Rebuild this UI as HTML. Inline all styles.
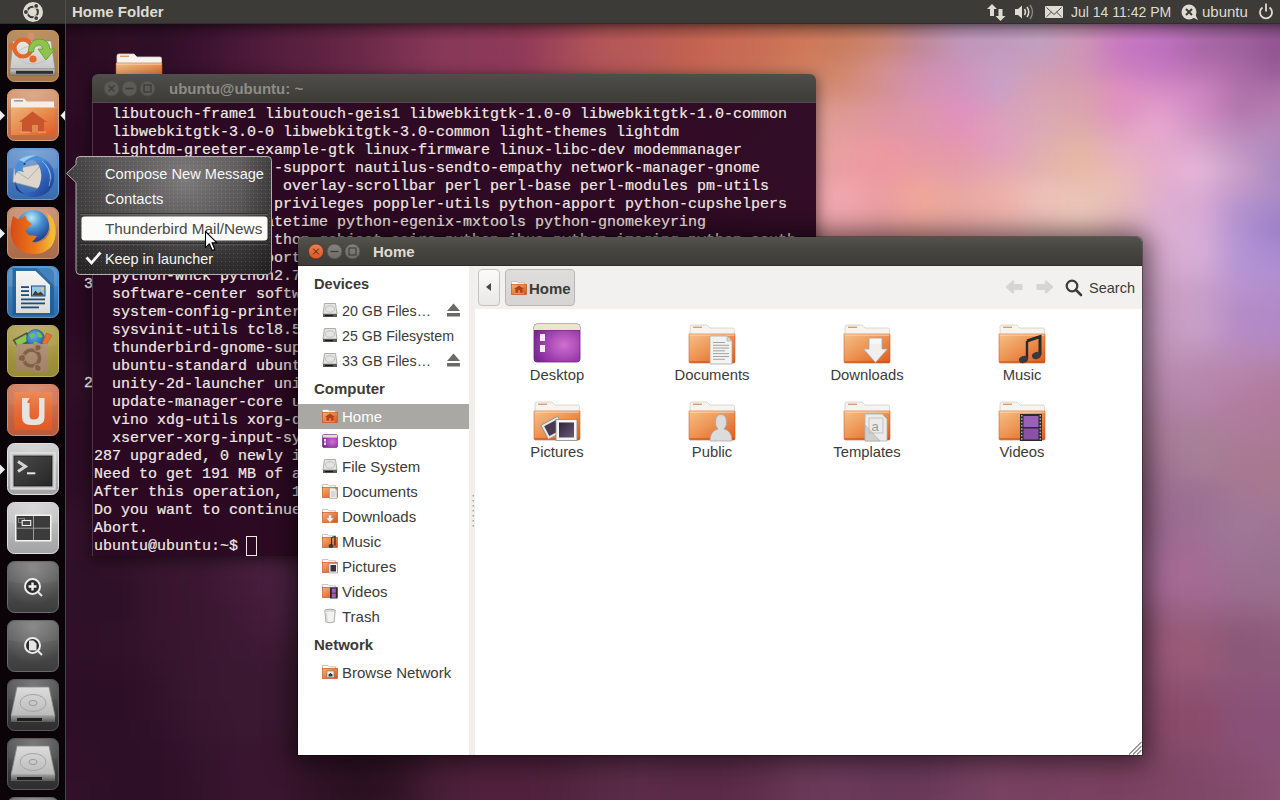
<!DOCTYPE html>
<html><head><meta charset="utf-8">
<style>
*{margin:0;padding:0;box-sizing:border-box}
html,body{width:1280px;height:800px;overflow:hidden}
body{position:relative;font-family:"Liberation Sans",sans-serif;background:#2c0f27}
.abs{position:absolute}
#wall{position:absolute;left:0;top:0;width:1280px;height:800px;overflow:hidden;background:#2c0f27}
#panel{position:absolute;left:0;top:0;width:1280px;height:24px;background:#3c3b37;border-bottom:1px solid #2f2e2b}
#pshadow{position:absolute;left:66px;top:24px;width:1214px;height:16px;background:linear-gradient(rgba(0,0,0,0.45),rgba(0,0,0,0.2) 40%,rgba(0,0,0,0))}
#launcher{position:absolute;left:0;top:24px;width:66px;height:776px;background:rgba(8,3,6,0.93);border-right:1px solid rgba(190,180,185,0.35)}
.tile{position:absolute;left:7px;width:52px;height:52px;border-radius:7px;overflow:hidden}
.tile svg{position:absolute;left:0;top:0}
.mono{font-family:"Liberation Mono",monospace}
</style></head><body>
<div id="wall"><div class="abs" style="left:-40px;top:-40px;width:1360px;height:880px;filter:blur(8px)"><div style="height:20px;background:linear-gradient(90deg,#3d172f 0px,#38142c 40px,#35122a 80px,#35122a 120px,#38132c 160px,#3d1530 200px,#441834 240px,#4d1c39 280px,#58213f 320px,#632645 360px,#6e2c4a 400px,#79324f 440px,#833854 480px,#8c3d57 520px,#964359 560px,#9f4b5b 600px,#aa545c 640px,#b45e5e 680px,#bc6660 720px,#c36f64 760px,#c87768 800px,#ca7d6c 840px,#cb8274 880px,#cb8785 920px,#c98d99 960px,#c892a8 1000px,#c996b1 1040px,#ca96b4 1080px,#cb92b5 1120px,#c98ab6 1160px,#c483b6 1200px,#bd7cb1 1240px,#b476ab 1280px,#b073a8 1320px,#b276a9 1360px)"></div><div style="height:20px;background:linear-gradient(90deg,#3b162e 0px,#35122a 40px,#311027 80px,#310f27 120px,#34112a 160px,#39132d 200px,#401632 240px,#4b1a38 280px,#561f3e 320px,#622544 360px,#6d2b4a 400px,#79314f 440px,#833754 480px,#8c3c57 520px,#954159 560px,#9f495a 600px,#ab535a 640px,#b65c5b 680px,#be645b 720px,#c46d5e 760px,#c97562 800px,#cb7b65 840px,#cb806c 880px,#ca8680 920px,#c88c99 960px,#c693ac 1000px,#c698b5 1040px,#c999b7 1080px,#cb93b7 1120px,#c988b9 1160px,#c480b8 1200px,#b978b0 1240px,#ae6fa8 1280px,#a96ba3 1320px,#ad71a6 1360px)"></div><div style="height:20px;background:linear-gradient(90deg,#39142c 0px,#321128 40px,#2d0e24 80px,#2d0d24 120px,#311028 160px,#34112a 200px,#3d1431 240px,#491837 280px,#551e3d 320px,#612443 360px,#6d2a49 400px,#793050 440px,#843655 480px,#8b3a57 520px,#943e58 560px,#9e4759 600px,#ae5359 640px,#b75b58 680px,#bf6256 720px,#c56a59 760px,#ca735d 800px,#cc795d 840px,#ca7d63 880px,#c98578 920px,#c48b99 960px,#c294b2 1000px,#c299ba 1040px,#c69cba 1080px,#cb94b7 1120px,#c983bb 1160px,#c37bbb 1200px,#b472ae 1240px,#a768a3 1280px,#9f609c 1320px,#a86ca3 1360px)"></div><div style="height:20px;background:linear-gradient(90deg,#37142b 0px,#301027 40px,#2b0d23 80px,#2b0c22 120px,#2f0f27 160px,#300f28 200px,#3b1230 240px,#491838 280px,#551e3e 320px,#5f2343 360px,#6b2949 400px,#7a3050 440px,#863757 480px,#8b3957 520px,#913a58 560px,#9f4758 600px,#b25458 640px,#b85a57 680px,#c06051 720px,#c66854 760px,#ca6f57 800px,#cd7757 840px,#c97c5d 880px,#c9836f 920px,#c08898 960px,#be96b9 1000px,#be99bd 1040px,#c1a0bf 1080px,#cd95b6 1120px,#c97cbf 1160px,#c174bf 1200px,#ad6baa 1240px,#a162a0 1280px,#945594 1320px,#a468a1 1360px)"></div><div style="height:20px;background:linear-gradient(90deg,#36132b 0px,#300f26 40px,#2b0c23 80px,#2a0c22 120px,#2f0e26 160px,#2e0e26 200px,#3a1230 240px,#4a1838 280px,#561e3e 320px,#5e2242 360px,#6a2848 400px,#7a3050 440px,#883858 480px,#8a3958 520px,#903858 560px,#a04858 600px,#b45658 640px,#b85958 680px,#c06050 720px,#c76852 760px,#c96c54 800px,#d07858 840px,#ca7d5f 880px,#cc8676 920px,#c18899 960px,#c196b9 1000px,#c19abf 1040px,#c29fbe 1080px,#cf96b3 1120px,#c878c0 1160px,#c070c0 1200px,#a967a7 1240px,#a0619f 1280px,#915191 1320px,#a468a1 1360px)"></div><div style="height:20px;background:linear-gradient(90deg,#36132a 0px,#300f26 40px,#2b0d23 80px,#2b0c22 120px,#2f0e27 160px,#300f28 200px,#3b1230 240px,#491837 280px,#551e3e 320px,#5f2343 360px,#6b2949 400px,#7a3050 440px,#863757 480px,#8b3957 520px,#913a58 560px,#9f4758 600px,#b05358 640px,#b75957 680px,#c06051 720px,#c66955 760px,#ca715a 800px,#d07f61 840px,#cf866c 880px,#d4908f 920px,#ce8fae 960px,#cd93bb 1000px,#c8a0c7 1040px,#ce9eb6 1080px,#d298b3 1120px,#ce81bf 1160px,#c679c0 1200px,#b874b1 1240px,#a96aa5 1280px,#985997 1320px,#a86ea5 1360px)"></div><div style="height:20px;background:linear-gradient(90deg,#36132a 0px,#300f27 40px,#2d0d24 80px,#2c0d24 120px,#300f27 160px,#34102a 200px,#3d1431 240px,#491837 280px,#541e3d 320px,#602343 360px,#6c2949 400px,#78304f 440px,#833655 480px,#8a3a57 520px,#923d58 560px,#9a4557 600px,#a24c57 640px,#b05657 680px,#bc6157 720px,#c56d5d 760px,#cd7b67 800px,#d28970 840px,#d38c76 880px,#d49090 920px,#d492b2 960px,#d493bc 1000px,#c9a0c7 1040px,#d6a2b0 1080px,#d89fae 1120px,#df90c0 1160px,#d68cc5 1200px,#cd85c0 1240px,#b071a9 1280px,#ab70a8 1320px,#af77ad 1360px)"></div><div style="height:20px;background:linear-gradient(90deg,#36132b 0px,#310f27 40px,#2d0d24 80px,#2c0c24 120px,#300e27 160px,#37122c 200px,#3f1532 240px,#491937 280px,#531e3d 320px,#5d2342 360px,#6a2948 400px,#76304e 440px,#803653 480px,#893a56 520px,#903e57 560px,#8e3f54 600px,#853a50 640px,#9d4c56 680px,#b7615d 720px,#c57267 760px,#d18476 800px,#dc988c 840px,#dd9990 880px,#dc959f 920px,#dd96ab 960px,#e091bf 1000px,#d79fbc 1040px,#d8a8b5 1080px,#dba5ab 1120px,#e091c0 1160px,#e29fcc 1200px,#d08ac3 1240px,#b276ac 1280px,#b47eb2 1320px,#b380b4 1360px)"></div><div style="height:20px;background:linear-gradient(90deg,#36132b 0px,#310f27 40px,#2c0c24 80px,#2a0a22 120px,#2e0d25 160px,#38122c 200px,#411632 240px,#491937 280px,#4f1c3a 320px,#57203f 360px,#652746 400px,#732f4d 440px,#7e3552 480px,#863a55 520px,#8a3d55 560px,#7e354f 600px,#6d2a49 640px,#873e52 680px,#af5f61 720px,#c4756f 760px,#d38981 800px,#df9c95 840px,#e29d9a 880px,#e297a3 920px,#e097a9 960px,#e293b9 1000px,#e0a0bf 1040px,#daa9b5 1080px,#dfada8 1120px,#e1a1bf 1160px,#e8a8d0 1200px,#d196c5 1240px,#b888b8 1280px,#b586b9 1320px,#b586ba 1360px)"></div><div style="height:20px;background:linear-gradient(90deg,#36132b 0px,#310f27 40px,#2c0b23 80px,#2a0a22 120px,#2d0c24 160px,#38122c 200px,#421733 240px,#471936 280px,#461736 320px,#4a1938 360px,#5c2342 400px,#6e2d4a 440px,#7a3550 480px,#823a53 520px,#853b53 560px,#75304d 600px,#6a2848 640px,#7c364f 680px,#a95d64 720px,#c27775 760px,#d58c88 800px,#e29c99 840px,#e8a0a0 880px,#ef98a0 920px,#e499a7 960px,#e698ab 1000px,#e0a0bf 1040px,#e0b0b0 1080px,#e6b6a4 1120px,#e6afc0 1160px,#e5aaca 1200px,#dba9d1 1240px,#c094c1 1280px,#ae89bf 1320px,#b489be 1360px)"></div><div style="height:20px;background:linear-gradient(90deg,#37132b 0px,#310f27 40px,#2c0b24 80px,#2a0a22 120px,#2e0c25 160px,#39132d 200px,#421733 240px,#441735 280px,#3e1232 320px,#3f1333 360px,#531f3d 400px,#682b48 440px,#75334e 480px,#7d3851 520px,#7f3952 560px,#75314d 600px,#6c2949 640px,#7d3851 680px,#a45b65 720px,#bf7679 760px,#d48c8c 800px,#e39c9c 840px,#e9a0a2 880px,#ef98a0 920px,#e89ea1 960px,#e59eaa 1000px,#e4a8b2 1040px,#e3b2b0 1080px,#e8baa6 1120px,#e8b8bb 1160px,#e5aecb 1200px,#e6b6da 1240px,#c79fc8 1280px,#a988c0 1320px,#b28bc0 1360px)"></div><div style="height:20px;background:linear-gradient(90deg,#37132b 0px,#321028 40px,#2e0c25 80px,#2c0b23 120px,#300e26 160px,#3a132d 200px,#421733 240px,#421534 280px,#3b1130 320px,#3b1131 360px,#4c1b39 400px,#632945 440px,#6f314b 480px,#75354e 520px,#793750 560px,#77344f 600px,#73304c 640px,#823e55 680px,#9f5a66 720px,#b97379 760px,#d18a8d 800px,#e49da1 840px,#f0a7af 880px,#eb9ca2 920px,#efa799 960px,#e8a5a4 1000px,#ecb0a9 1040px,#ebbfb7 1080px,#eac2b3 1120px,#e8beb6 1160px,#e0aecd 1200px,#dcaed4 1240px,#bf99c9 1280px,#ac8ac3 1320px,#b08bc3 1360px)"></div><div style="height:20px;background:linear-gradient(90deg,#38132c 0px,#331029 40px,#300e26 80px,#2f0d25 120px,#320f28 160px,#3a142e 200px,#421733 240px,#411533 280px,#3b1030 320px,#3b1130 360px,#491a38 400px,#5e2743 440px,#672d48 480px,#6a2e49 520px,#70324c 560px,#77364f 600px,#7a3851 640px,#864358 680px,#975464 720px,#ad6a74 760px,#cb858b 800px,#e49ca2 840px,#f0a8b0 880px,#e89ea3 920px,#efa799 960px,#e9a7a2 1000px,#ecb0a8 1040px,#ecbfb8 1080px,#ecc8b8 1120px,#e4b9b9 1160px,#deaed2 1200px,#d9abd4 1240px,#b291cf 1280px,#a386c9 1320px,#ad8ac6 1360px)"></div><div style="height:20px;background:linear-gradient(90deg,#38142c 0px,#331029 40px,#300e26 80px,#2f0d26 120px,#330f28 160px,#3a142d 200px,#421733 240px,#411634 280px,#3c1231 320px,#3d1232 360px,#4a1b39 400px,#5b2642 440px,#5e2844 480px,#5a2541 520px,#602944 560px,#71344d 600px,#7c3c53 640px,#834358 680px,#85475b 720px,#975868 760px,#bf7b85 800px,#dd979e 840px,#eaa2a9 880px,#e29ba0 920px,#e8a29b 960px,#e5a5a3 1000px,#e7aeab 1040px,#e7b9b4 1080px,#e9c3b7 1120px,#dfb3bb 1160px,#ddaed3 1200px,#d8add6 1240px,#b191d0 1280px,#9a80c8 1320px,#ab89c7 1360px)"></div><div style="height:20px;background:linear-gradient(90deg,#38132c 0px,#331028 40px,#2e0d25 80px,#2d0c24 120px,#300e27 160px,#39132d 200px,#411733 240px,#431734 280px,#401433 320px,#411534 360px,#4c1d3a 400px,#582440 440px,#55223f 480px,#4a1b39 520px,#4d1d3b 560px,#652e48 600px,#783b53 640px,#793d54 680px,#6b334d 720px,#773e55 760px,#ac6c79 800px,#d28d96 840px,#dd979f 880px,#d58f97 920px,#d99498 960px,#df9fa2 1000px,#e2aaab 1040px,#e1b1b2 1080px,#deb2b5 1120px,#d7a9bb 1160px,#d7aace 1200px,#d8b0d8 1240px,#b493d3 1280px,#a688ce 1320px,#ad8ac8 1360px)"></div><div style="height:20px;background:linear-gradient(90deg,#37132c 0px,#320f27 40px,#2d0c24 80px,#2b0a23 120px,#2e0c25 160px,#37122b 200px,#401732 240px,#431835 280px,#431735 320px,#451936 360px,#4e1f3b 400px,#55233f 440px,#4d1d3b 480px,#3f1433 520px,#401433 560px,#592642 600px,#723850 640px,#6d344d 680px,#55213f 720px,#5a2542 760px,#95596b 800px,#c6828d 840px,#d08b95 880px,#c37d8a 920px,#c57f8b 960px,#d6979e 1000px,#dca3aa 1040px,#daa7b0 1080px,#cd9eb2 1120px,#cb9cb6 1160px,#d1a5c9 1200px,#d4abd5 1240px,#b593d3 1280px,#af8ed3 1320px,#b08cc8 1360px)"></div><div style="height:20px;background:linear-gradient(90deg,#37132b 0px,#310f27 40px,#2b0b23 80px,#2a0a22 120px,#2c0b24 160px,#36122a 200px,#3f1731 240px,#431934 280px,#441935 320px,#471b37 360px,#4e203b 400px,#52223e 440px,#481a38 480px,#3b1131 520px,#3b1131 560px,#52213e 600px,#6d354e 640px,#642e49 680px,#4d1a3a 720px,#4e1b3a 760px,#844a60 800px,#ba7986 840px,#c6818e 880px,#ba7382 920px,#bb7383 960px,#ce8e99 1000px,#d59da8 1040px,#d29faf 1080px,#c393b0 1120px,#c293b2 1160px,#cb9fc3 1200px,#c9a0ca 1240px,#b892cc 1280px,#b28dcc 1320px,#b38cc5 1360px)"></div><div style="height:20px;background:linear-gradient(90deg,#37132b 0px,#310f27 40px,#2b0b23 80px,#2a0a22 120px,#2c0b23 160px,#35112a 200px,#3e1731 240px,#411933 280px,#411933 320px,#441b35 360px,#4b1f3a 400px,#50213d 440px,#471937 480px,#3b1131 520px,#3b1131 560px,#4f203d 600px,#69334d 640px,#622c48 680px,#4c1a3a 720px,#4d1b3a 760px,#7d445b 800px,#b27281 840px,#c07c8a 880px,#b97281 920px,#ba7282 960px,#c88996 1000px,#d097a5 1040px,#cc9aad 1080px,#c291b0 1120px,#c192b1 1160px,#c79bc1 1200px,#c8a0c8 1240px,#b48cc7 1280px,#b189c7 1320px,#b48bc2 1360px)"></div><div style="height:20px;background:linear-gradient(90deg,#37132c 0px,#310f28 40px,#2c0c24 80px,#2b0a23 120px,#2d0c24 160px,#36122b 200px,#3d1730 240px,#3e1831 280px,#3c1730 320px,#3e1831 360px,#471d37 400px,#4e213c 440px,#481b39 480px,#3e1332 520px,#3e1333 560px,#52223f 600px,#68334d 640px,#642e4a 680px,#521f3d 720px,#54213f 760px,#7f465d 800px,#ac6d7e 840px,#bc7988 880px,#bb7484 920px,#bc7685 960px,#c58695 1000px,#ca92a3 1040px,#c995ab 1080px,#c392b0 1120px,#c293b2 1160px,#c499bf 1200px,#c8a0c8 1240px,#b48bc5 1280px,#b189c6 1320px,#b489bd 1360px)"></div><div style="height:20px;background:linear-gradient(90deg,#37142c 0px,#321028 40px,#2e0d25 80px,#2d0c24 120px,#300e26 160px,#37132b 200px,#3c1730 240px,#3b162f 280px,#36132c 320px,#37142c 360px,#411a33 400px,#4c203b 440px,#4b1e3b 480px,#441836 520px,#451937 560px,#572642 600px,#68344d 640px,#68334d 680px,#5d2945 720px,#622d49 760px,#854c63 800px,#a86b7c 840px,#b77686 880px,#ba7787 920px,#bc7a8a 960px,#c28595 1000px,#c58ea0 1040px,#c591a8 1080px,#c291ae 1120px,#c191b1 1160px,#c094b9 1200px,#c095bd 1240px,#b78ab9 1280px,#b387bb 1320px,#b387b6 1360px)"></div><div style="height:20px;background:linear-gradient(90deg,#38142c 0px,#331129 40px,#300e27 80px,#2f0e26 120px,#310f28 160px,#37132c 200px,#3b162f 240px,#38142d 280px,#321129 320px,#321129 360px,#3c1730 400px,#4b203a 440px,#4f213d 480px,#4b1e3b 520px,#4e203d 560px,#5b2a46 600px,#67344e 640px,#6b3650 680px,#69344f 720px,#713b55 760px,#8c5268 800px,#a5687b 840px,#b17384 880px,#b67687 920px,#b97a8b 960px,#bc8194 1000px,#bf889d 1040px,#c08ca4 1080px,#be8da9 1120px,#bc8dad 1160px,#bb8db1 1200px,#b989b1 1240px,#b686ae 1280px,#b280a7 1320px,#b383ad 1360px)"></div><div style="height:20px;background:linear-gradient(90deg,#37142c 0px,#331129 40px,#300f27 80px,#2f0e26 120px,#310f28 160px,#37132c 200px,#3b162f 240px,#36142c 280px,#301028 320px,#311028 360px,#39162e 400px,#492039 440px,#51243f 480px,#522440 520px,#552642 560px,#5c2c47 600px,#64324c 640px,#6b3751 680px,#713c55 720px,#7c455d 760px,#8f566c 800px,#a06579 840px,#a96d80 880px,#ac6f83 920px,#af7487 960px,#b47b90 1000px,#b88299 1040px,#b9859f 1080px,#b886a3 1120px,#b686a6 1160px,#b587aa 1200px,#b787ae 1240px,#b480a5 1280px,#b07a9b 1320px,#b180a6 1360px)"></div><div style="height:20px;background:linear-gradient(90deg,#37142c 0px,#321129 40px,#2f0e26 80px,#2d0d25 120px,#300e27 160px,#36132c 200px,#3a162f 240px,#36142c 280px,#301028 320px,#311028 360px,#39162e 400px,#492039 440px,#522540 480px,#552742 520px,#572944 560px,#592a46 600px,#5b2c48 640px,#65344e 680px,#723e57 720px,#804961 760px,#90576d 800px,#9b6176 840px,#9d6479 880px,#9c6379 920px,#a0677e 960px,#a97289 1000px,#b17b93 1040px,#b27e99 1080px,#b07d9b 1120px,#af7f9e 1160px,#af81a1 1200px,#b183a5 1240px,#b17c9d 1280px,#b0799a 1320px,#b07ea1 1360px)"></div><div style="height:20px;background:linear-gradient(90deg,#37142c 0px,#321028 40px,#2d0d25 80px,#2c0c24 120px,#2e0d26 160px,#35132b 200px,#3a162f 240px,#37152d 280px,#321129 320px,#321129 360px,#3b1730 400px,#49203a 440px,#532641 480px,#572944 520px,#562844 560px,#512542 600px,#4f2441 640px,#5a2c48 680px,#6d3b55 720px,#804a62 760px,#8e566d 800px,#945c72 840px,#905870 880px,#86516b 920px,#8a556f 960px,#9c667f 1000px,#a8738d 1040px,#aa7692 1080px,#a77492 1120px,#a77696 1160px,#a97d9a 1200px,#a98099 1240px,#ad7c9b 1280px,#ad7a99 1320px,#ad7c9d 1360px)"></div><div style="height:20px;background:linear-gradient(90deg,#37142c 0px,#321028 40px,#2d0d25 80px,#2c0c24 120px,#2e0d25 160px,#35132b 200px,#3b1730 240px,#3a1630 280px,#36142c 320px,#36142d 360px,#3f1933 400px,#4b213b 440px,#532741 480px,#562944 520px,#522642 560px,#481e3d 600px,#431b3a 640px,#4d2340 680px,#663651 720px,#7c4861 760px,#8a546b 800px,#8d566e 840px,#814c66 880px,#703d5b 920px,#73405d 960px,#8d5874 1000px,#a06b87 1040px,#a26e8c 1080px,#9d6888 1120px,#9f6d8d 1160px,#a57996 1200px,#a88098 1240px,#a97a95 1280px,#a97993 1320px,#ab7b9a 1360px)"></div><div style="height:20px;background:linear-gradient(90deg,#37142d 0px,#321029 40px,#2e0d25 80px,#2c0c24 120px,#2e0e26 160px,#36132c 200px,#3c1831 240px,#3d1832 280px,#3b1731 320px,#3c1831 360px,#431c36 400px,#4c223d 440px,#532742 480px,#542843 520px,#4e2340 560px,#411a39 600px,#3c1635 640px,#441c3a 680px,#5e304c 720px,#78455f 760px,#865169 800px,#86506a 840px,#75425e 880px,#61304f 920px,#623150 960px,#7f4c69 1000px,#996582 1040px,#9c6786 1080px,#955f7f 1120px,#976383 1160px,#9f7392 1200px,#a67d97 1240px,#a87892 1280px,#a87891 1320px,#a97997 1360px)"></div><div style="height:20px;background:linear-gradient(90deg,#37152d 0px,#33112a 40px,#2f0e26 80px,#2d0d25 120px,#300f28 160px,#37142d 200px,#3d1832 240px,#401a35 280px,#411b36 320px,#421c36 360px,#461f39 400px,#4d233e 440px,#522742 480px,#532743 520px,#4b213f 560px,#3e1737 600px,#3a1434 640px,#3f1838 680px,#592c49 720px,#75425d 760px,#824e67 800px,#804c66 840px,#6e3b59 880px,#5c2b4b 920px,#5c2c4c 960px,#774462 1000px,#94607d 1040px,#996382 1080px,#915a7a 1120px,#925c7c 1160px,#9b6f90 1200px,#9d7292 1240px,#a57793 1280px,#a77892 1320px,#a77796 1360px)"></div><div style="height:20px;background:linear-gradient(90deg,#38152e 0px,#34122b 40px,#311028 80px,#300f27 120px,#32112a 160px,#38152e 200px,#3d1833 240px,#421b37 280px,#451d3a 320px,#461e3a 360px,#48203b 400px,#4d233e 440px,#512641 480px,#512642 520px,#4a213e 560px,#3e1736 600px,#3a1434 640px,#3f1837 680px,#572b48 720px,#72415b 760px,#7f4b65 800px,#7d4964 840px,#6c3a58 880px,#5b2b4b 920px,#5c2c4b 960px,#744261 1000px,#915c7b 1040px,#976181 1080px,#915a7a 1120px,#925c7c 1160px,#9b6c90 1200px,#9c7092 1240px,#a17796 1280px,#a47693 1320px,#a47594 1360px)"></div><div style="height:20px;background:linear-gradient(90deg,#38152e 0px,#35132b 40px,#32112a 80px,#311129 120px,#33122b 160px,#38152f 200px,#3d1833 240px,#431c39 280px,#471f3d 320px,#481f3d 360px,#49203c 400px,#4c233e 440px,#4f2540 480px,#4f2541 520px,#4a213e 560px,#401938 600px,#3c1535 640px,#421a39 680px,#592c49 720px,#71405b 760px,#7d4964 800px,#7b4863 840px,#6d3b59 880px,#5f2f4e 920px,#602f4f 960px,#774463 1000px,#8f5a79 1040px,#966080 1080px,#935c7d 1120px,#966183 1160px,#9a6890 1200px,#9e7093 1240px,#a07898 1280px,#9f7393 1320px,#a17393 1360px)"></div><div style="height:20px;background:linear-gradient(90deg,#38162e 0px,#35132c 40px,#32122a 80px,#301129 120px,#32122a 160px,#38152f 200px,#3c1732 240px,#441c3a 280px,#49203f 320px,#491f3e 360px,#49203d 400px,#4c223e 440px,#4d243f 480px,#4d2340 520px,#4b213e 560px,#441c3b 600px,#411938 640px,#481f3e 680px,#5c2f4c 720px,#703f5b 760px,#7b4863 800px,#7a4763 840px,#703e5c 880px,#663554 920px,#683756 960px,#7b4866 1000px,#8d5877 1040px,#945f7f 1080px,#955f80 1120px,#9a6589 1160px,#9e6992 1200px,#a16d95 1240px,#9e7495 1280px,#9c7191 1320px,#9f7191 1360px)"></div><div style="height:20px;background:linear-gradient(90deg,#38162e 0px,#35142c 40px,#31122a 80px,#2f1029 120px,#301129 160px,#38152f 200px,#3b1631 240px,#441c3a 280px,#4a2040 320px,#49203f 360px,#49203d 400px,#4a223d 440px,#4b223e 480px,#49213e 520px,#49213e 560px,#49203d 600px,#481f3d 640px,#502543 680px,#60324f 720px,#703f5b 760px,#794662 800px,#784662 840px,#72405d 880px,#6c3b59 920px,#6f3d5c 960px,#7c4968 1000px,#8b5675 1040px,#925c7c 1080px,#945d7f 1120px,#9a6388 1160px,#a56a96 1200px,#a66b96 1240px,#9b7090 1280px,#9a7090 1320px,#9c6e8f 1360px)"></div><div style="height:20px;background:linear-gradient(90deg,#38162e 0px,#34132c 40px,#31112a 80px,#2e1028 120px,#2e1028 160px,#38152f 200px,#3a1630 240px,#421b38 280px,#4a2040 320px,#491f3f 360px,#48203c 400px,#49213d 440px,#48203c 480px,#451e3b 520px,#461e3c 560px,#4a213e 600px,#4e2441 640px,#562a47 680px,#643551 720px,#703f5b 760px,#774561 800px,#774461 840px,#703e5d 880px,#6b3958 920px,#6d3b5b 960px,#7a4766 1000px,#885373 1040px,#8e5777 1080px,#8e5678 1120px,#955d81 1160px,#a36892 1200px,#a36993 1240px,#9a6d8e 1280px,#9a6e8e 1320px,#9b6c8c 1360px)"></div><div style="height:20px;background:linear-gradient(90deg,#38162e 0px,#34132c 40px,#30112a 80px,#2e1028 120px,#2e1028 160px,#38152f 200px,#3a1630 240px,#3f1935 280px,#491f3e 320px,#471f3d 360px,#471f3b 400px,#47203b 440px,#461e3b 480px,#421c39 520px,#431c3a 560px,#49203e 600px,#512743 640px,#5a2e4a 680px,#663753 720px,#703f5b 760px,#75435f 800px,#74425f 840px,#6d3b5a 880px,#653554 920px,#663655 960px,#754262 1000px,#85506f 1040px,#895272 1080px,#844c6c 1120px,#8b5273 1160px,#9b6085 1200px,#9c6387 1240px,#956485 1280px,#966687 1320px,#986788 1360px)"></div><div style="height:20px;background:linear-gradient(90deg,#37162e 0px,#34132c 40px,#31112a 80px,#2f1028 120px,#2f1129 160px,#37152e 200px,#3a1630 240px,#3e1934 280px,#441d3a 320px,#451d3a 360px,#451e3a 400px,#461f3a 440px,#441d3a 480px,#411a38 520px,#411b38 560px,#471f3c 600px,#522744 640px,#5d2f4c 680px,#663753 720px,#6f3e5a 760px,#73415e 800px,#72405e 840px,#6a3857 880px,#613151 920px,#623251 960px,#703e5e 1000px,#824d6c 1040px,#854d6d 1080px,#7d4363 1120px,#804666 1160px,#985a7a 1200px,#985c7b 1240px,#8c5a7a 1280px,#8f5d7e 1320px,#956384 1360px)"></div><div style="height:20px;background:linear-gradient(90deg,#37162e 0px,#33132c 40px,#301129 80px,#2f1028 120px,#301129 160px,#36142d 200px,#3a1731 240px,#3c1833 280px,#3f1a35 320px,#411c37 360px,#421d37 400px,#441e39 440px,#431d39 480px,#401a38 520px,#401a38 560px,#461f3c 600px,#532844 640px,#5e304c 680px,#663653 720px,#6c3c58 760px,#713f5c 800px,#703f5c 840px,#683756 880px,#603050 920px,#613151 960px,#6e3c5c 1000px,#804b6a 1040px,#834a6a 1080px,#7b4161 1120px,#7c4262 1160px,#995978 1200px,#995a78 1240px,#8a5878 1280px,#8c597a 1320px,#925f80 1360px)"></div><div style="height:20px;background:linear-gradient(90deg,#37162e 0px,#33132b 40px,#301129 80px,#2d0f27 120px,#2e0f27 160px,#34132c 200px,#391731 240px,#3a1832 280px,#3b1933 320px,#3e1a34 360px,#3f1b34 400px,#431d37 440px,#441d39 480px,#411a38 520px,#411b38 560px,#471f3c 600px,#532844 640px,#5e304c 680px,#643551 720px,#693955 760px,#6e3d5a 800px,#6f3e5c 840px,#693857 880px,#613151 920px,#623151 960px,#6f3d5c 1000px,#7f4969 1040px,#82496a 1080px,#7c4263 1120px,#7f4565 1160px,#955776 1200px,#965877 1240px,#8b5878 1280px,#8c587a 1320px,#905b7e 1360px)"></div><div style="height:20px;background:linear-gradient(90deg,#37162e 0px,#33132b 40px,#2f1028 80px,#2c0e26 120px,#2c0e26 160px,#32122b 200px,#391731 240px,#3a1832 280px,#3a1832 320px,#3b1831 360px,#3c1931 400px,#401b34 440px,#441d39 480px,#431c39 520px,#431c3a 560px,#4a213e 600px,#552845 640px,#5d2f4c 680px,#62324f 720px,#663552 760px,#6b3a57 800px,#6e3d5b 840px,#6a3958 880px,#653454 920px,#663555 960px,#713f5e 1000px,#7e4868 1040px,#814969 1080px,#804666 1120px,#844969 1160px,#8e506f 1200px,#8e5172 1240px,#8c5478 1280px,#8b5479 1320px,#8f587c 1360px)"></div><div style="height:20px;background:linear-gradient(90deg,#37162e 0px,#33132b 40px,#2f1028 80px,#2c0e26 120px,#2c0e26 160px,#31122a 200px,#381630 240px,#3a1832 280px,#3a1832 320px,#38172f 360px,#37162c 400px,#3d1a31 440px,#451d38 480px,#471e3a 520px,#491f3b 560px,#4d223f 600px,#562945 640px,#5d2e4b 680px,#5f2f4c 720px,#61314e 760px,#683754 800px,#6d3c5a 840px,#6c3b5a 880px,#693858 920px,#6a3959 960px,#734060 1000px,#7d4666 1040px,#7f4767 1080px,#814868 1120px,#854a6a 1160px,#8a4b6b 1200px,#8b4c6c 1240px,#8a5177 1280px,#8a5178 1320px,#8e567a 1360px)"></div><div style="height:20px;background:linear-gradient(90deg,#38162f 0px,#33132c 40px,#301029 80px,#2d0f27 120px,#2d0f27 160px,#30112a 200px,#37152f 240px,#3a1831 280px,#391730 320px,#35152b 360px,#311327 400px,#39172d 440px,#461d37 480px,#4c1f3b 520px,#4e203c 560px,#50233f 600px,#572945 640px,#5c2d4a 680px,#5c2c4a 720px,#5d2d4b 760px,#643351 800px,#6c3a59 840px,#6c3b5a 880px,#6a3a59 920px,#6c3a5a 960px,#734060 1000px,#7b4565 1040px,#7c4464 1080px,#7f4666 1120px,#824868 1160px,#894a6a 1200px,#8a4b6b 1240px,#8a5077 1280px,#8a5078 1320px,#8d5579 1360px)"></div><div style="height:20px;background:linear-gradient(90deg,#38162f 0px,#34142c 40px,#311129 80px,#2e1028 120px,#2e0f28 160px,#2f1029 200px,#34132d 240px,#391630 280px,#391530 320px,#321328 360px,#2c1122 400px,#351529 440px,#471d37 480px,#4f203c 520px,#50203c 560px,#51233f 600px,#572945 640px,#5c2c49 680px,#5b2b49 720px,#5b2b49 760px,#61314e 800px,#6a3958 840px,#6c3b5a 880px,#693959 920px,#6a3959 960px,#723f5f 1000px,#7a4363 1040px,#794161 1080px,#7c4363 1120px,#7d4363 1160px,#844868 1200px,#864b6b 1240px,#894f74 1280px,#8a5177 1320px,#8d5479 1360px)"></div><div style="height:20px;background:linear-gradient(90deg,#391730 0px,#35142d 40px,#32122a 80px,#301029 120px,#2e0f28 160px,#2e0f28 200px,#33122b 240px,#391530 280px,#3a1530 320px,#301226 360px,#2a1020 400px,#321427 440px,#481e37 480px,#50203c 520px,#50203c 560px,#51233e 600px,#582945 640px,#5b2c49 680px,#5a2a48 720px,#5a2a48 760px,#5f2f4d 800px,#6a3957 840px,#6b3a5a 880px,#683858 920px,#683858 960px,#713e5e 1000px,#794262 1040px,#784060 1080px,#7a4161 1120px,#7a4060 1160px,#7e4464 1200px,#814869 1240px,#864c6f 1280px,#8a5175 1320px,#8d5478 1360px)"></div><div style="height:20px;background:linear-gradient(90deg,#3a1830 0px,#36152e 40px,#33132b 80px,#30112a 120px,#2e0f28 160px,#2e0f28 200px,#32122b 240px,#39152f 280px,#3a1530 320px,#301226 360px,#2a1020 400px,#321427 440px,#481e37 480px,#50203c 520px,#50203c 560px,#52233e 600px,#582946 640px,#5b2c49 680px,#5a2a48 720px,#5a2a48 760px,#5f2f4d 800px,#693857 840px,#6b3a5a 880px,#683858 920px,#683858 960px,#703e5e 1000px,#794262 1040px,#784060 1080px,#7a4161 1120px,#7a4060 1160px,#7e4464 1200px,#804868 1240px,#834b6b 1280px,#895073 1320px,#8c5477 1360px)"></div><div style="height:20px;background:linear-gradient(90deg,#3b1831 0px,#37162f 40px,#34132c 80px,#31112a 120px,#2f1029 160px,#2f0f28 200px,#33122b 240px,#39152f 280px,#39152f 320px,#311327 360px,#2c1122 400px,#341528 440px,#481e37 480px,#4f203c 520px,#50203c 560px,#52233f 600px,#592a46 640px,#5c2c49 680px,#5b2b49 720px,#5b2b49 760px,#60304e 800px,#6a3957 840px,#6c3b5a 880px,#693959 920px,#6a3959 960px,#723f5e 1000px,#794262 1040px,#794161 1080px,#7a4262 1120px,#7b4262 1160px,#7f4565 1200px,#804868 1240px,#834a6b 1280px,#885072 1320px,#8c5477 1360px)"></div><div style="height:20px;background:linear-gradient(90deg,#3c1932 0px,#39172f 40px,#35142d 80px,#33122b 120px,#30112a 160px,#30112a 200px,#34132c 240px,#38152f 280px,#38152e 320px,#331429 360px,#301325 400px,#37162b 440px,#471e37 480px,#4f203c 520px,#50213d 560px,#532440 600px,#592a47 640px,#5c2d4a 680px,#5c2c4a 720px,#5d2c4a 760px,#62324f 800px,#6b3958 840px,#6d3c5b 880px,#6b3a5a 920px,#6c3b5b 960px,#744060 1000px,#7a4363 1040px,#7a4262 1080px,#7c4363 1120px,#7d4464 1160px,#804767 1200px,#814969 1240px,#844b6c 1280px,#885072 1320px,#8c5476 1360px)"></div></div></div>

<!-- TOP PANEL -->
<div id="panel">
 <svg class="abs" style="left:0;top:0" width="66" height="24" viewBox="0 0 66 24">
  <circle cx="33" cy="12" r="10" fill="#dfdbd2"/>
  <circle cx="32.6" cy="12" r="5.3" fill="none" stroke="#3c3b37" stroke-width="2"/>
  <circle cx="25.9" cy="12" r="2.9" fill="#dfdbd2"/><circle cx="36.2" cy="5.9" r="2.9" fill="#dfdbd2"/><circle cx="36.2" cy="18.1" r="2.9" fill="#dfdbd2"/>
  <circle cx="25.9" cy="12" r="1.9" fill="#3c3b37"/><circle cx="36.2" cy="5.9" r="1.9" fill="#3c3b37"/><circle cx="36.2" cy="18.1" r="1.9" fill="#3c3b37"/>
 </svg>
 <div class="abs" style="left:65px;top:0;width:1px;height:24px;background:#4f4e4a"></div>
 <div class="abs" style="left:72px;top:3px;font-size:15px;font-weight:bold;color:#dfdbd2;line-height:18px">Home Folder</div>
 <svg class="abs" style="left:980px;top:0" width="300" height="24" viewBox="0 0 300 24">
  <!-- transfer arrows -->
  <path d="M12 4 L7 9 L10 9 L10 16 L14 16 L14 9 L17 9 Z" fill="#dfdbd2"/>
  <path d="M20.5 21 L15.5 16 L18.5 16 L18.5 9 L22.5 9 L22.5 16 L25.5 16 Z" fill="#dfdbd2"/>
  <!-- volume -->
  <path d="M35 9 L38 9 L42 5.5 L42 18.5 L38 15 L35 15 Z" fill="#dfdbd2"/>
  <path d="M44.5 9 Q46.5 12 44.5 15" stroke="#dfdbd2" stroke-width="1.5" fill="none"/>
  <path d="M47 7 Q50.5 12 47 17" stroke="#dfdbd2" stroke-width="1.5" fill="none"/>
  <path d="M50 5 Q55 12 50 19" stroke="#8a8984" stroke-width="1.3" fill="none"/>
  <!-- mail -->
  <rect x="65" y="6" width="18" height="12" rx="1" fill="#dfdbd2"/>
  <path d="M66.5 7.5 L74 14.5 L81.5 7.5 M66.5 16.8 L71.5 12 M81.5 16.8 L76.5 12" stroke="#3c3b37" stroke-width="0.9" fill="none"/>
  <!-- chat -->
  <circle cx="209" cy="12" r="7.5" fill="#dfdbd2"/>
  <path d="M212 17 L218 20 L215 14 Z" fill="#dfdbd2"/>
  <path d="M206 9 L212 15 M212 9 L206 15" stroke="#3c3b37" stroke-width="2"/>
  <!-- power -->
  <path d="M282.5 7.5 A6 6 0 1 0 289.5 7.5" fill="none" stroke="#dfdbd2" stroke-width="1.8"/>
  <rect x="285.1" y="3.5" width="1.8" height="8" fill="#dfdbd2"/>
 </svg>
 <div class="abs" style="left:1071px;top:3px;font-size:14px;color:#dfdbd2;line-height:18px">Jul 14 11:42 PM</div>
 <div class="abs" style="left:1202px;top:3px;font-size:15px;color:#dfdbd2;line-height:18px">ubuntu</div>
</div>

<!-- LAUNCHER -->
<svg class="abs" style="left:115px;top:53px" width="48" height="40" viewBox="0 0 48 40"><use href="#folder48" width="48" height="40"/></svg>
<div class="abs mono" style="left:84px;top:276px;font-size:15px;line-height:18px;color:#f4f0ea;-webkit-text-stroke:0.3px #f4f0ea">3</div>
<div class="abs mono" style="left:84px;top:375px;font-size:15px;line-height:18px;color:#f4f0ea;-webkit-text-stroke:0.3px #f4f0ea">2</div>
<div id="term" class="abs" style="left:92px;top:74px;width:724px;height:482px;border-radius:6px 6px 0 0;overflow:hidden;box-shadow:0 3px 14px 1px rgba(0,0,0,0.5)">
 <div class="abs" style="left:0;top:0;width:724px;height:29px;background:linear-gradient(#4f4e4a,#43423e 60%,#3d3c38);border-bottom:1px solid #55484f"></div>
 <svg class="abs" style="left:0;top:0" width="80" height="28" viewBox="92 74 80 28">
  <circle cx="111.5" cy="88.5" r="7.5" fill="#5c5b56" stroke="#4e4d49" stroke-width="1"/>
  <path d="M108.5 85.5 L114.5 91.5 M114.5 85.5 L108.5 91.5" stroke="#3c3b37" stroke-width="1.3"/>
  <circle cx="129.5" cy="88.5" r="7.5" fill="#5c5b56" stroke="#4e4d49" stroke-width="1"/>
  <path d="M125.5 88.5 L133.5 88.5" stroke="#3c3b37" stroke-width="1.3"/>
  <circle cx="147.5" cy="88.5" r="7.5" fill="#5c5b56" stroke="#4e4d49" stroke-width="1"/>
  <rect x="144" y="85" width="7" height="7" fill="none" stroke="#3c3b37" stroke-width="1.3"/>
 </svg>
 <div class="abs" style="left:77px;top:6px;font-size:15px;font-weight:bold;color:#8e8c86;line-height:18px;white-space:nowrap">ubuntu@ubuntu: ~</div>
 <div class="abs" style="left:0;top:29px;width:724px;height:453px;background:linear-gradient(90deg,rgba(44,9,34,0.98),rgba(45,9,35,0.98) 70%,rgba(46,10,36,0.98));border-left:1px solid rgba(120,90,110,0.5)"></div>
 <pre class="abs mono" style="left:2px;top:32px;font-size:15px;line-height:18px;color:#efe9e2;margin:0;-webkit-text-stroke:0.2px #efe9e2">  libutouch-frame1 libutouch-geis1 libwebkitgtk-1.0-0 libwebkitgtk-1.0-common
  libwebkitgtk-3.0-0 libwebkitgtk-3.0-common light-themes lightdm
  lightdm-greeter-example-gtk linux-firmware linux-libc-dev modemmanager
  multiarch-suppon  -support nautilus-sendto-empathy network-manager-gnome
  nautilus-sharinge  overlay-scrollbar perl perl-base perl-modules pm-utils
  policykit-desktop-privileges poppler-utils python-apport python-cupshelpers
  python-egenix-mxdatetime python-egenix-mxtools python-gnomekeyring
  python-gconf pyt  thon-gobject-cairo python-ibus python-imaging python-south
  python-launchpadlport python-ubuntuone-control-panel python-uno
  python-wnck python2.7 python2.7-minimal rhythmbox rhythmbox-plugins
  software-center software-center-aptdaemon-plugins software-properties-gtk
  system-config-printer-common system-config-printer-gnome
  sysvinit-utils tcl8.5 telepathy-gabble telepathy-idle telepathy-logger
  thunderbird-gnome-support totem totem-common totem-mozilla
  ubuntu-standard ubuntuone-client ubuntuone-client-gnome
  unity-2d-launcher unity-2d-panel unity-2d-places unity-2d-spread
  update-manager-core update-notifier update-notifier-common usb-creator-gtk
  vino xdg-utils xorg-docs-core xserver-common xserver-xorg
  xserver-xorg-input-synaptics xserver-xorg-video-all
287 upgraded, 0 newly installed, 0 to remove and 0 not upgraded.
Need to get 191 MB of archives.
After this operation, 18.4 MB of additional disk space will be used.
Do you want to continue [Y/n]? n
Abort.
ubuntu@ubuntu:~$ </pre>
 <div class="abs" style="left:154px;top:462px;width:11px;height:20px;border:1.5px solid #efe9e2"></div>
</div>
<div id="pshadow"></div>
<div id="launcher"><svg class="abs" style="left:7px;top:6px" width="52" height="52" viewBox="0 0 52 52">
<defs><linearGradient id="l1" x1="0" y1="0" x2="0" y2="1"><stop offset="0" stop-color="#b58652"/><stop offset="1" stop-color="#a87845"/></linearGradient>
<radialGradient id="l1g" cx=".5" cy=".15" r=".7"><stop offset="0" stop-color="#ffffff" stop-opacity="0.08"/><stop offset="1" stop-color="#ffffff" stop-opacity="0"/></radialGradient></defs>
<rect x="0.5" y="0.5" width="51" height="51" rx="7" fill="url(#l1)" stroke="#c89a6a" stroke-width="1"/>
<rect x="1" y="1" width="50" height="50" rx="6.5" fill="url(#l1g)"/>
<path d="M1.5 8 Q1.5 1.5 8 1.5 L44 1.5 Q50.5 1.5 50.5 8 L50.5 20 Q26 26 1.5 20 Z" fill="#fff" opacity="0.04"/>

<defs><linearGradient id="hddtop1" x1="0" y1="0" x2="0" y2="1"><stop offset="0" stop-color="#e8e8e6"/><stop offset="1" stop-color="#c8c8c6"/></linearGradient>
<linearGradient id="hddfr1" x1="0" y1="0" x2="0" y2="1"><stop offset="0" stop-color="#d0d0ce"/><stop offset="1" stop-color="#7a7a78"/></linearGradient></defs>
<polygon points="6,11 44,11 48,39 3,39" fill="url(#hddtop1)" stroke="#8e8e8c" stroke-width="0.7"/>
<ellipse cx="26" cy="25" rx="15" ry="9" fill="none" stroke="#bcbcba" stroke-width="0.8"/>
<rect x="3" y="39" width="45" height="6.5" fill="url(#hddfr1)" stroke="#6a6a68" stroke-width="0.5"/>
<rect x="9" y="40.8" width="37" height="3" fill="#2e2e2e"/>
<circle cx="16" cy="18" r="8.5" fill="none" stroke="#e2682a" stroke-width="4.2"/>
<circle cx="4.8" cy="16.5" r="3.4" fill="#e2682a" opacity=".85"/><circle cx="26" cy="29" r="3.6" fill="#e2682a"/><circle cx="24" cy="6" r="3.4" fill="#e89070" opacity=".6"/>
<path d="M4.8 16.5 m3 0" stroke="#d8d8d6" stroke-width="1.5"/>
<path d="M21 22 Q22 10 32 9 Q42 9 43 19 L48 19 L39 30 L31 19 L36 19 Q35 15 32 15 Q27 15 26.5 22 Z" fill="#8ec24a" stroke="#5e9a2a" stroke-width=".8"/>

</svg>
<svg class="abs" style="left:7px;top:65px" width="52" height="52" viewBox="0 0 52 52">
<defs><linearGradient id="l2" x1="0" y1="0" x2="0" y2="1"><stop offset="0" stop-color="#d28e66"/><stop offset="1" stop-color="#ba6843"/></linearGradient>
<radialGradient id="l2g" cx=".5" cy=".15" r=".7"><stop offset="0" stop-color="#ffffff" stop-opacity="0.18"/><stop offset="1" stop-color="#ffffff" stop-opacity="0"/></radialGradient></defs>
<rect x="0.5" y="0.5" width="51" height="51" rx="7" fill="url(#l2)" stroke="#dca078" stroke-width="1"/>
<rect x="1" y="1" width="50" height="50" rx="6.5" fill="url(#l2g)"/>
<path d="M1.5 8 Q1.5 1.5 8 1.5 L44 1.5 Q50.5 1.5 50.5 8 L50.5 20 Q26 26 1.5 20 Z" fill="#fff" opacity="0.1"/>

<defs><linearGradient id="hb" x1="0" y1="0" x2="1" y2="1"><stop offset="0" stop-color="#eeb47a"/><stop offset="0.5" stop-color="#e88a4c"/><stop offset="1" stop-color="#e05a22"/></linearGradient></defs>
<path d="M4 11 Q4 9.5 5.5 9.5 L17 9.5 L20 12.5 L47 12.5 L47 19 L4 19 Z" fill="#f2eeea"/>
<rect x="7" y="11" width="9" height="1.6" fill="#a89890"/>
<rect x="4" y="18" width="44" height="28" fill="url(#hb)"/>
<rect x="4" y="18" width="44" height="1" fill="#ffd0a8" opacity=".7"/>
<polygon points="12,33 25.5,22.5 40,33" fill="#c8552c"/>
<rect x="15" y="33" width="22" height="10" fill="#c8552c"/>
<rect x="25" y="36" width="6" height="7" fill="#e2884e"/>
<rect x="13" y="42.5" width="10" height="1.2" fill="#f4a070"/><rect x="31" y="42.5" width="8" height="1.2" fill="#f4a070"/>

</svg>
<svg class="abs" style="left:7px;top:124px" width="52" height="52" viewBox="0 0 52 52">
<defs><linearGradient id="l3" x1="0" y1="0" x2="0" y2="1"><stop offset="0" stop-color="#5488c8"/><stop offset="1" stop-color="#3a6aae"/></linearGradient>
<radialGradient id="l3g" cx=".5" cy=".15" r=".7"><stop offset="0" stop-color="#ffffff" stop-opacity="0.18"/><stop offset="1" stop-color="#ffffff" stop-opacity="0"/></radialGradient></defs>
<rect x="0.5" y="0.5" width="51" height="51" rx="7" fill="url(#l3)" stroke="#6a9cd6" stroke-width="1"/>
<rect x="1" y="1" width="50" height="50" rx="6.5" fill="url(#l3g)"/>
<path d="M1.5 8 Q1.5 1.5 8 1.5 L44 1.5 Q50.5 1.5 50.5 8 L50.5 20 Q26 26 1.5 20 Z" fill="#fff" opacity="0.1"/>

<defs><linearGradient id="tbw" x1="0" y1="0" x2="1" y2="1"><stop offset="0" stop-color="#7ab8ec"/><stop offset=".5" stop-color="#3a72c8"/><stop offset="1" stop-color="#1a3488"/></linearGradient></defs>
<polygon points="7,21 34,16 37,42 6,34" fill="#dcd6cc" stroke="#a8a49c" stroke-width=".6"/>
<path d="M9 23 L21 31 L33 18" fill="none" stroke="#a09c94" stroke-width=".7"/>
<path d="M24 8 Q40 8 46 21 Q50 35 41 44 Q32 51 20 48 Q12 45 9 38 Q15 44 24 44 Q31 43 33 36 Q36 26 32 18 Q29 13 24 11 Z" fill="url(#tbw)"/>
<path d="M35 13 Q44 20 44 31 M38 16 Q46 26 42 38" fill="none" stroke="#9ad0f4" stroke-width="1" opacity=".6"/>
<path d="M8 28 Q6 17 14 11 Q22 5 31 8 Q37 10 38 14 Q31 10 24 12 Q18 14 16 19 Q15 22 17 24 L12 23 Q9 24 8 28 Z" fill="#4a90d8"/>
<path d="M12 12 Q20 6 30 7.5 Q22 9 17 14 Z" fill="#a8d8f8" opacity=".85"/>
<circle cx="17.5" cy="16" r="1" fill="#1a3a80"/>
<path d="M8 33 Q10 42 18 46 Q12 45 9 41 Z" fill="#1e3a8a"/>

</svg>
<svg class="abs" style="left:7px;top:183px" width="52" height="52" viewBox="0 0 52 52">
<defs><linearGradient id="l4" x1="0" y1="0" x2="0" y2="1"><stop offset="0" stop-color="#bf8160"/><stop offset="1" stop-color="#aa6b4a"/></linearGradient>
<radialGradient id="l4g" cx=".5" cy=".15" r=".7"><stop offset="0" stop-color="#ffffff" stop-opacity="0.18"/><stop offset="1" stop-color="#ffffff" stop-opacity="0"/></radialGradient></defs>
<rect x="0.5" y="0.5" width="51" height="51" rx="7" fill="url(#l4)" stroke="#cc9670" stroke-width="1"/>
<rect x="1" y="1" width="50" height="50" rx="6.5" fill="url(#l4g)"/>
<path d="M1.5 8 Q1.5 1.5 8 1.5 L44 1.5 Q50.5 1.5 50.5 8 L50.5 20 Q26 26 1.5 20 Z" fill="#fff" opacity="0.1"/>

<defs><radialGradient id="ffg" cx=".45" cy=".25" r=".75"><stop offset="0" stop-color="#b8ecf8"/><stop offset=".45" stop-color="#4a90d0"/><stop offset="1" stop-color="#1a3a90"/></radialGradient>
<linearGradient id="ffo" x1="0" y1="0" x2="1" y2="0"><stop offset="0" stop-color="#d84a14"/><stop offset=".55" stop-color="#ec7a1c"/><stop offset="1" stop-color="#f8c838"/></linearGradient></defs>
<circle cx="26" cy="19" r="16" fill="url(#ffg)"/>
<path d="M6 9 L12 13 L18 8.5 L20 13 L25 17 L21 21 L18 24 L22 28 L30 29 L27 33 Q23 36 29 36 Q41 34 43 23 Q45 13 40 6 Q49 12 48.5 26 Q48 40 36 45.5 Q24 49.5 14 43.5 Q4 37 3.5 25 Q4 15 6 9 Z" fill="url(#ffo)"/>
<path d="M40 6 Q49 12 48.5 26 Q48 36 42 42 Q46 30 43 20 Z" fill="#f6b830" opacity=".9"/>

</svg>
<svg class="abs" style="left:7px;top:242px" width="52" height="52" viewBox="0 0 52 52">
<defs><linearGradient id="l5" x1="0" y1="0" x2="0" y2="1"><stop offset="0" stop-color="#4288c6"/><stop offset="1" stop-color="#2e6ca8"/></linearGradient>
<radialGradient id="l5g" cx=".5" cy=".15" r=".7"><stop offset="0" stop-color="#ffffff" stop-opacity="0.18"/><stop offset="1" stop-color="#ffffff" stop-opacity="0"/></radialGradient></defs>
<rect x="0.5" y="0.5" width="51" height="51" rx="7" fill="url(#l5)" stroke="#5a9ad2" stroke-width="1"/>
<rect x="1" y="1" width="50" height="50" rx="6.5" fill="url(#l5g)"/>
<path d="M1.5 8 Q1.5 1.5 8 1.5 L44 1.5 Q50.5 1.5 50.5 8 L50.5 20 Q26 26 1.5 20 Z" fill="#fff" opacity="0.1"/>

<path d="M5.5 2 L30 2 L47 19 L47 49 L5.5 49 Z" fill="#1d5a92" opacity=".75"/>
<path d="M30 2 L47 19 L47 9 Q47 2 40 2 Z" fill="#3a7ab8" opacity=".8"/>
<defs><linearGradient id="wdoc" x1="0" y1="0" x2="0" y2="1"><stop offset="0" stop-color="#f6f6f4"/><stop offset="1" stop-color="#dcdcda"/></linearGradient></defs>
<path d="M9 5 L28.5 5 L43 19 L43 47 L9 47 Z" fill="url(#wdoc)"/>
<rect x="14" y="20.2" width="8" height="1.8" fill="#1e4e7e"/><rect x="14" y="24.2" width="8" height="1.8" fill="#1e4e7e"/><rect x="14" y="28.2" width="8" height="1.8" fill="#1e4e7e"/>
<rect x="14" y="32.5" width="24" height="1.8" fill="#1e4e7e"/><rect x="14" y="36.5" width="24" height="1.8" fill="#1e4e7e"/><rect x="14" y="40.5" width="18" height="1.8" fill="#1e4e7e"/>
<rect x="24.5" y="20" width="13.5" height="10" fill="#90c8e8" stroke="#1e4e7e" stroke-width="1"/>
<polygon points="25,29.5 28.5,24.5 31,27.5 33.5,25.5 37.5,29.5" fill="#4a3a30"/>
<circle cx="35.5" cy="22.5" r="1.3" fill="#f0d050"/>

</svg>
<svg class="abs" style="left:7px;top:301px" width="52" height="52" viewBox="0 0 52 52">
<defs><linearGradient id="l6" x1="0" y1="0" x2="0" y2="1"><stop offset="0" stop-color="#ab9e48"/><stop offset="1" stop-color="#968a34"/></linearGradient>
<radialGradient id="l6g" cx=".5" cy=".15" r=".7"><stop offset="0" stop-color="#ffffff" stop-opacity="0.18"/><stop offset="1" stop-color="#ffffff" stop-opacity="0"/></radialGradient></defs>
<rect x="0.5" y="0.5" width="51" height="51" rx="7" fill="url(#l6)" stroke="#bcb060" stroke-width="1"/>
<rect x="1" y="1" width="50" height="50" rx="6.5" fill="url(#l6g)"/>
<path d="M1.5 8 Q1.5 1.5 8 1.5 L44 1.5 Q50.5 1.5 50.5 8 L50.5 20 Q26 26 1.5 20 Z" fill="#fff" opacity="0.05"/>

<polygon points="6,15 20,7.5 25,16 11,23" fill="#5a5a48" stroke="#3a3a30" stroke-width=".6"/>
<polygon points="8,15.5 19,9.5 22,15 11,21" fill="#88c850"/>
<defs><radialGradient id="scg" cx=".4" cy=".35" r=".7"><stop offset="0" stop-color="#60b0f0"/><stop offset="1" stop-color="#1a5aa8"/></radialGradient></defs>
<circle cx="28.5" cy="13.5" r="9" fill="url(#scg)" stroke="#2a4a70" stroke-width=".6"/>
<path d="M22 10 Q25 7 28 9 Q27 13 24 14 Z M30 6.5 Q35 8 35.5 12 Q32 14 30.5 11 Z M27 17 Q31 16 32 20 Q28 22 26 20 Z" fill="#78c048"/>
<polygon points="39.5,8 45,10.5 39,20 35,18" fill="#e8702a" stroke="#a84a18" stroke-width=".5"/>
<defs><linearGradient id="bag" x1="0" y1="0" x2="0" y2="1"><stop offset="0" stop-color="#b09478"/><stop offset="1" stop-color="#a08264"/></linearGradient></defs>
<polygon points="9.5,19 41,19 41.5,47 9,47" fill="url(#bag)"/>
<circle cx="24.5" cy="33" r="8" fill="none" stroke="#806048" stroke-width="3.6"/>
<circle cx="14.5" cy="33" r="2.6" fill="#806048"/><circle cx="31" cy="22.5" r="2.6" fill="#806048"/><circle cx="31" cy="43" r="2.6" fill="#806048"/>
<circle cx="14.5" cy="33" r="4" fill="none" stroke="#a88a6c" stroke-width="1.2"/><circle cx="31" cy="22.5" r="4" fill="none" stroke="#a88a6c" stroke-width="1.2"/><circle cx="31" cy="43" r="4" fill="none" stroke="#a88a6c" stroke-width="1.2"/>

</svg>
<svg class="abs" style="left:7px;top:360px" width="52" height="52" viewBox="0 0 52 52">
<defs><linearGradient id="l7" x1="0" y1="0" x2="0" y2="1"><stop offset="0" stop-color="#cf7452"/><stop offset="1" stop-color="#b85a3c"/></linearGradient>
<radialGradient id="l7g" cx=".5" cy=".15" r=".7"><stop offset="0" stop-color="#ffffff" stop-opacity="0.18"/><stop offset="1" stop-color="#ffffff" stop-opacity="0"/></radialGradient></defs>
<rect x="0.5" y="0.5" width="51" height="51" rx="7" fill="url(#l7)" stroke="#d88a6a" stroke-width="1"/>
<rect x="1" y="1" width="50" height="50" rx="6.5" fill="url(#l7g)"/>
<path d="M1.5 8 Q1.5 1.5 8 1.5 L44 1.5 Q50.5 1.5 50.5 8 L50.5 20 Q26 26 1.5 20 Z" fill="#fff" opacity="0.06"/>

<defs><linearGradient id="u1" x1="0" y1="0" x2="0" y2="1"><stop offset="0" stop-color="#ec8a58"/><stop offset=".5" stop-color="#e86a34"/><stop offset="1" stop-color="#e05a26"/></linearGradient></defs>
<rect x="7" y="8" width="38" height="38" fill="url(#u1)"/>
<path d="M15 14 L22.5 14 L22.5 31 Q22.5 35.5 26.5 35.5 Q32 35.5 32 31 L32 14 L37.5 14 L37.5 33 Q37.5 41 29 41 L24 41 Q15 41 15 33 Z" fill="#e6e4e2"/>
<path d="M20.5 17.5 L23 14 L23.5 14 L23.5 19 L20.5 19 Z" fill="#e86a34"/>

</svg>
<svg class="abs" style="left:7px;top:419px" width="52" height="52" viewBox="0 0 52 52">
<defs><linearGradient id="l8" x1="0" y1="0" x2="0" y2="1"><stop offset="0" stop-color="#c8c8c8"/><stop offset="1" stop-color="#a2a2a2"/></linearGradient>
<radialGradient id="l8g" cx=".5" cy=".15" r=".7"><stop offset="0" stop-color="#ffffff" stop-opacity="0.18"/><stop offset="1" stop-color="#ffffff" stop-opacity="0"/></radialGradient></defs>
<rect x="0.5" y="0.5" width="51" height="51" rx="7" fill="url(#l8)" stroke="#e4e4e4" stroke-width="1"/>
<rect x="1" y="1" width="50" height="50" rx="6.5" fill="url(#l8g)"/>
<path d="M1.5 8 Q1.5 1.5 8 1.5 L44 1.5 Q50.5 1.5 50.5 8 L50.5 20 Q26 26 1.5 20 Z" fill="#fff" opacity="0.12"/>

<rect x="4" y="10" width="44" height="36" fill="#c4c4c4" stroke="#eeeeee" stroke-width="1"/>
<defs><linearGradient id="tscr" x1="0" y1="0" x2="1" y2="1"><stop offset="0" stop-color="#4a4a4a"/><stop offset="1" stop-color="#262626"/></linearGradient></defs>
<rect x="7" y="13" width="38" height="30" fill="url(#tscr)" stroke="#1a1a1a" stroke-width="0.8"/>
<path d="M11 18.5 L18.5 23.5 L11 28.5" fill="none" stroke="#d4d4d4" stroke-width="3"/>
<rect x="20" y="29.3" width="8.3" height="2" fill="#e4e4e4"/>

</svg>
<svg class="abs" style="left:7px;top:478px" width="52" height="52" viewBox="0 0 52 52">
<defs><linearGradient id="l9" x1="0" y1="0" x2="0" y2="1"><stop offset="0" stop-color="#c4c4c4"/><stop offset="1" stop-color="#a4a4a4"/></linearGradient>
<radialGradient id="l9g" cx=".5" cy=".15" r=".7"><stop offset="0" stop-color="#ffffff" stop-opacity="0.3"/><stop offset="1" stop-color="#ffffff" stop-opacity="0"/></radialGradient></defs>
<rect x="0.5" y="0.5" width="51" height="51" rx="7" fill="url(#l9)" stroke="#e0e0e0" stroke-width="1"/>
<rect x="1" y="1" width="50" height="50" rx="6.5" fill="url(#l9g)"/>
<path d="M1.5 8 Q1.5 1.5 8 1.5 L44 1.5 Q50.5 1.5 50.5 8 L50.5 20 Q26 26 1.5 20 Z" fill="#fff" opacity="0.12"/>

<rect x="8" y="12.5" width="36.5" height="27" fill="#f4f4f4"/>
<rect x="9.5" y="14" width="33.5" height="24" fill="#3c3c3c"/>
<path d="M26.5 14 L26.5 38 M9.5 26.2 L43 26.2" stroke="#a8a8a8" stroke-width="0.9"/>
<rect x="11.5" y="16.5" width="6" height="4" fill="none" stroke="#8a8a8a" stroke-width="0.9"/>
<rect x="15.2" y="18.5" width="8.5" height="5" fill="#454545" stroke="#f0f0f0" stroke-width="1.1"/>

</svg>
<svg class="abs" style="left:7px;top:537px" width="52" height="52" viewBox="0 0 52 52">
<defs><linearGradient id="l10" x1="0" y1="0" x2="0" y2="1"><stop offset="0" stop-color="#606060"/><stop offset="1" stop-color="#3c3c3c"/></linearGradient>
<radialGradient id="l10g" cx=".5" cy=".15" r=".7"><stop offset="0" stop-color="#ffffff" stop-opacity="0.25"/><stop offset="1" stop-color="#ffffff" stop-opacity="0"/></radialGradient></defs>
<rect x="0.5" y="0.5" width="51" height="51" rx="7" fill="url(#l10)" stroke="#6a6a6a" stroke-width="1"/>
<rect x="1" y="1" width="50" height="50" rx="6.5" fill="url(#l10g)"/>
<path d="M1.5 8 Q1.5 1.5 8 1.5 L44 1.5 Q50.5 1.5 50.5 8 L50.5 20 Q26 26 1.5 20 Z" fill="#fff" opacity="0.05"/>

<circle cx="25.5" cy="25.5" r="7.5" fill="#2c2c2c" stroke="#ececec" stroke-width="2"/>
<path d="M25.5 21.5 L25.5 29.5 M21.5 25.5 L29.5 25.5" stroke="#f0f0f0" stroke-width="2.4"/>
<path d="M31 31 L35 35" stroke="#e8e8e8" stroke-width="2"/>

</svg>
<svg class="abs" style="left:7px;top:596px" width="52" height="52" viewBox="0 0 52 52">
<defs><linearGradient id="l11" x1="0" y1="0" x2="0" y2="1"><stop offset="0" stop-color="#606060"/><stop offset="1" stop-color="#3c3c3c"/></linearGradient>
<radialGradient id="l11g" cx=".5" cy=".15" r=".7"><stop offset="0" stop-color="#ffffff" stop-opacity="0.25"/><stop offset="1" stop-color="#ffffff" stop-opacity="0"/></radialGradient></defs>
<rect x="0.5" y="0.5" width="51" height="51" rx="7" fill="url(#l11)" stroke="#6a6a6a" stroke-width="1"/>
<rect x="1" y="1" width="50" height="50" rx="6.5" fill="url(#l11g)"/>
<path d="M1.5 8 Q1.5 1.5 8 1.5 L44 1.5 Q50.5 1.5 50.5 8 L50.5 20 Q26 26 1.5 20 Z" fill="#fff" opacity="0.05"/>

<circle cx="25.5" cy="25.5" r="7.5" fill="#2c2c2c" stroke="#ececec" stroke-width="2"/>
<path d="M22 20.5 L26.5 20.5 L29.5 23.5 L29.5 30.5 L22 30.5 Z" fill="#e4e4e4"/>
<path d="M31 31 L35 35" stroke="#e8e8e8" stroke-width="2"/>

</svg>
<svg class="abs" style="left:7px;top:655px" width="52" height="52" viewBox="0 0 52 52">
<defs><linearGradient id="l12" x1="0" y1="0" x2="0" y2="1"><stop offset="0" stop-color="#4c4c4c"/><stop offset="1" stop-color="#2e2e2e"/></linearGradient>
<radialGradient id="l12g" cx=".5" cy=".15" r=".7"><stop offset="0" stop-color="#ffffff" stop-opacity="0.25"/><stop offset="1" stop-color="#ffffff" stop-opacity="0"/></radialGradient></defs>
<rect x="0.5" y="0.5" width="51" height="51" rx="7" fill="url(#l12)" stroke="#5a5a5a" stroke-width="1"/>
<rect x="1" y="1" width="50" height="50" rx="6.5" fill="url(#l12g)"/>
<path d="M1.5 8 Q1.5 1.5 8 1.5 L44 1.5 Q50.5 1.5 50.5 8 L50.5 20 Q26 26 1.5 20 Z" fill="#fff" opacity="0.04"/>
<defs><linearGradient id="h1h" x1="0" y1="0" x2="0" y2="1"><stop offset="0" stop-color="#dcdcdc"/><stop offset="1" stop-color="#bababa"/></linearGradient>
<linearGradient id="h1f" x1="0" y1="0" x2="0" y2="1"><stop offset="0" stop-color="#9a9a9a"/><stop offset="1" stop-color="#5a5a5a"/></linearGradient></defs>
<polygon points="10,8 42,8 48,37 4,37" fill="url(#h1h)" stroke="#8a8a8a" stroke-width=".8"/>
<ellipse cx="26" cy="24" rx="13" ry="8.5" fill="none" stroke="#a4a4a4" stroke-width="1"/>
<ellipse cx="26" cy="24" rx="4" ry="2.6" fill="none" stroke="#9a9a9a" stroke-width="1"/>
<rect x="4" y="37" width="44" height="6" fill="url(#h1f)"/>
<rect x="10" y="39" width="25" height="3" fill="#1e1e1e"/>
</svg>
<svg class="abs" style="left:7px;top:714px" width="52" height="52" viewBox="0 0 52 52">
<defs><linearGradient id="l13" x1="0" y1="0" x2="0" y2="1"><stop offset="0" stop-color="#4c4c4c"/><stop offset="1" stop-color="#2e2e2e"/></linearGradient>
<radialGradient id="l13g" cx=".5" cy=".15" r=".7"><stop offset="0" stop-color="#ffffff" stop-opacity="0.25"/><stop offset="1" stop-color="#ffffff" stop-opacity="0"/></radialGradient></defs>
<rect x="0.5" y="0.5" width="51" height="51" rx="7" fill="url(#l13)" stroke="#5a5a5a" stroke-width="1"/>
<rect x="1" y="1" width="50" height="50" rx="6.5" fill="url(#l13g)"/>
<path d="M1.5 8 Q1.5 1.5 8 1.5 L44 1.5 Q50.5 1.5 50.5 8 L50.5 20 Q26 26 1.5 20 Z" fill="#fff" opacity="0.04"/>
<defs><linearGradient id="h2h" x1="0" y1="0" x2="0" y2="1"><stop offset="0" stop-color="#dcdcdc"/><stop offset="1" stop-color="#bababa"/></linearGradient>
<linearGradient id="h2f" x1="0" y1="0" x2="0" y2="1"><stop offset="0" stop-color="#9a9a9a"/><stop offset="1" stop-color="#5a5a5a"/></linearGradient></defs>
<polygon points="10,8 42,8 48,37 4,37" fill="url(#h2h)" stroke="#8a8a8a" stroke-width=".8"/>
<ellipse cx="26" cy="24" rx="13" ry="8.5" fill="none" stroke="#a4a4a4" stroke-width="1"/>
<ellipse cx="26" cy="24" rx="4" ry="2.6" fill="none" stroke="#9a9a9a" stroke-width="1"/>
<rect x="4" y="37" width="44" height="6" fill="url(#h2f)"/>
<rect x="10" y="39" width="25" height="3" fill="#1e1e1e"/>
</svg>
<svg class="abs" style="left:7px;top:773px" width="52" height="52" viewBox="0 0 52 52">
<defs><linearGradient id="l14" x1="0" y1="0" x2="0" y2="1"><stop offset="0" stop-color="#5a5a5a"/><stop offset="1" stop-color="#2e2e2e"/></linearGradient>
<radialGradient id="l14g" cx=".5" cy=".15" r=".7"><stop offset="0" stop-color="#ffffff" stop-opacity="0.3"/><stop offset="1" stop-color="#ffffff" stop-opacity="0"/></radialGradient></defs>
<rect x="0.5" y="0.5" width="51" height="51" rx="7" fill="url(#l14)" stroke="#6a6a6a" stroke-width="1"/>
<rect x="1" y="1" width="50" height="50" rx="6.5" fill="url(#l14g)"/>
<path d="M1.5 8 Q1.5 1.5 8 1.5 L44 1.5 Q50.5 1.5 50.5 8 L50.5 20 Q26 26 1.5 20 Z" fill="#fff" opacity="0.1"/>

</svg><svg class="abs" style="left:0;top:0" width="66" height="776" viewBox="0 24 66 776">
<polygon points="0,110.5 5,115.5 0,120.5" fill="#f0f0f0"/>
<polygon points="65,110.5 60.5,115.5 65,120.5" fill="#f0f0f0"/>
<polygon points="0,228.5 5,233.5 0,238.5" fill="#f0f0f0"/>
<polygon points="0,464.5 5,469.5 0,474.5" fill="#f0f0f0"/>
</svg></div>
<svg class="abs" style="left:60px;top:150px" width="220" height="130" viewBox="60 150 220 130">
<defs>
 <linearGradient id="qlg" x1="0" y1="0" x2="0" y2="1"><stop offset="0" stop-color="#575555"/><stop offset=".5" stop-color="#4c4a4a"/><stop offset="1" stop-color="#2a2828"/></linearGradient>
 <radialGradient id="qlr" cx="185" cy="180" r="85" gradientUnits="userSpaceOnUse"><stop offset="0" stop-color="#8e8c8c" stop-opacity=".7"/><stop offset="1" stop-color="#7a7878" stop-opacity="0"/></radialGradient>
 <pattern id="qdots" x="0" y="0" width="4" height="4" patternUnits="userSpaceOnUse"><rect x="1" y="1" width="1" height="1" fill="#fff" opacity=".16"/></pattern>
<linearGradient id="qvig" x1="66" y1="0" x2="272" y2="0" gradientUnits="userSpaceOnUse"><stop offset="0" stop-color="#000" stop-opacity=".25"/><stop offset=".2" stop-color="#000" stop-opacity="0"/><stop offset=".85" stop-color="#000" stop-opacity="0"/><stop offset="1" stop-color="#000" stop-opacity=".25"/></linearGradient>
</defs>
<path d="M76 160.5 Q76 156.5 80 156.5 L267.5 156.5 Q271.5 156.5 271.5 160.5 L271.5 270.5 Q271.5 274.5 267.5 274.5 L80 274.5 Q76 274.5 76 270.5 L76 182.5 L66.5 173.5 L76 164.5 Z" fill="url(#qlg)"/>
<path d="M76 160.5 Q76 156.5 80 156.5 L267.5 156.5 Q271.5 156.5 271.5 160.5 L271.5 270.5 Q271.5 274.5 267.5 274.5 L80 274.5 Q76 274.5 76 270.5 L76 182.5 L66.5 173.5 L76 164.5 Z" fill="url(#qlr)"/>
<path d="M76 160.5 Q76 156.5 80 156.5 L267.5 156.5 Q271.5 156.5 271.5 160.5 L271.5 270.5 Q271.5 274.5 267.5 274.5 L80 274.5 Q76 274.5 76 270.5 L76 182.5 L66.5 173.5 L76 164.5 Z" fill="url(#qvig)"/>
<path d="M76 160.5 Q76 156.5 80 156.5 L267.5 156.5 Q271.5 156.5 271.5 160.5 L271.5 270.5 Q271.5 274.5 267.5 274.5 L80 274.5 Q76 274.5 76 270.5 L76 182.5 L66.5 173.5 L76 164.5 Z" fill="url(#qdots)"/>
<path d="M76 160.5 Q76 156.5 80 156.5 L267.5 156.5 Q271.5 156.5 271.5 160.5 L271.5 270.5 Q271.5 274.5 267.5 274.5 L80 274.5 Q76 274.5 76 270.5 L76 182.5 L66.5 173.5 L76 164.5 Z" fill="none" stroke="#b4b0b0" stroke-width="1"/>
<rect x="80" y="213" width="188" height="1" fill="#2a2828" opacity=".8"/><rect x="80" y="214" width="188" height="1" fill="#7a7878" opacity=".5"/>
<rect x="80" y="243" width="188" height="1" fill="#2a2828" opacity=".8"/><rect x="80" y="244" width="188" height="1" fill="#6a6868" opacity=".5"/>
<rect x="81.5" y="216.5" width="186" height="24" rx="3" fill="#fbfbfa"/>
<path d="M86.5 257.5 L91.5 263 L100.5 252.5" fill="none" stroke="#f6f6f6" stroke-width="2.7"/>
</svg>
<div class="abs" style="left:105px;top:165px;font-size:14.6px;line-height:18px;color:#f6f6f6;white-space:nowrap">Compose New Message</div>
<div class="abs" style="left:105px;top:190px;font-size:14.8px;line-height:18px;color:#f6f6f6;white-space:nowrap">Contacts</div>
<div class="abs" style="left:105px;top:220px;font-size:15.3px;line-height:18px;color:#4a4945;white-space:nowrap">Thunderbird Mail/News</div>
<div class="abs" style="left:105px;top:250px;font-size:14.4px;line-height:18px;color:#f6f6f6;white-space:nowrap">Keep in launcher</div>

<svg width="0" height="0" style="position:absolute">
<defs>
 <linearGradient id="fgrad" x1="0" y1="0" x2="1" y2="1"><stop offset="0" stop-color="#f5c088"/><stop offset="0.45" stop-color="#ee9656"/><stop offset="1" stop-color="#df5a1c"/></linearGradient>
 <linearGradient id="fgrad16" x1="0" y1="0" x2="1" y2="1"><stop offset="0" stop-color="#f4b070"/><stop offset="1" stop-color="#d9501a"/></linearGradient>
 <radialGradient id="dgrad" cx=".65" cy=".55" r=".7"><stop offset="0" stop-color="#d070d0"/><stop offset=".6" stop-color="#a040b0"/><stop offset="1" stop-color="#7a2590"/></radialGradient>
 <symbol id="folder48" viewBox="0 0 48 40">
  <path d="M2 3 Q2 1 4 1 L19 1 L22 4 L45 4 Q46.5 4 46.5 5.5 L46.5 12 L2 12 Z" fill="#f6f4f1" stroke="#d6d0ca" stroke-width="0.8"/>
  <rect x="5" y="2.6" width="9" height="1.4" fill="#e39a6a"/>
  <path d="M1 10 L47 10 L47 37.5 Q47 39 45.5 39 L2.5 39 Q1 39 1 37.5 Z" fill="url(#fgrad)"/>
  <path d="M1 10 L47 10 L47 37.5 Q47 39 45.5 39 L2.5 39 Q1 39 1 37.5 Z" fill="none" stroke="#d05a22" stroke-width="0.8" opacity=".7"/>
  <rect x="1.5" y="10.5" width="45" height="1.2" fill="#ffdcb0" opacity=".8"/>
  <rect x="1.5" y="37" width="45" height="1.6" fill="#c04810" opacity=".5"/>
 </symbol>
 <symbol id="folder16" viewBox="0 0 16 16">
  <path d="M0.5 1.5 L6 1.5 L7.3 2.8 L13.5 2.8 L13.5 6 L0.5 6 Z" fill="#fbfaf8" stroke="#b6aea6" stroke-width="0.7"/>
  <rect x="0.5" y="4.5" width="15" height="10" fill="url(#fgrad16)" stroke="#c9561e" stroke-width="0.7"/>
 </symbol>
 <symbol id="hdd16" viewBox="0 0 16 16">
  <path d="M2.5 1.5 L13.5 1.5 L15 12 L1 12 Z" fill="#e4e4e2" stroke="#9a9a98" stroke-width="0.8"/>
  <ellipse cx="8" cy="7" rx="4.5" ry="3.2" fill="none" stroke="#b8b8b6" stroke-width="0.8"/>
  <rect x="1" y="12" width="14" height="3" fill="#5a5a58"/>
  <rect x="3" y="13" width="8" height="1.2" fill="#1a1a1a"/>
 </symbol>
</defs></svg>
<div id="naut" class="abs" style="left:298px;top:237px;width:844px;height:518px;border-radius:5px 5px 0 0;box-shadow:0 0 0 1px rgba(0,0,0,0.3),0 1px 26px 6px rgba(0,0,0,0.55);background:#fff"></div>
<div class="abs" style="left:298px;top:237px;width:844px;height:29px;border-radius:5px 5px 0 0;background:linear-gradient(#53524d,#45443f 50%,#3d3c38);border-bottom:1px solid #2e2d2a"></div>
<svg class="abs" style="left:298px;top:237px" width="80" height="29" viewBox="298 237 80 29">
 <defs><linearGradient id="cbg" x1="0" y1="0" x2="0" y2="1"><stop offset="0" stop-color="#f0824e"/><stop offset="1" stop-color="#dc5424"/></linearGradient>
 <linearGradient id="gbg" x1="0" y1="0" x2="0" y2="1"><stop offset="0" stop-color="#85847f"/><stop offset="1" stop-color="#6c6b67"/></linearGradient></defs>
 <circle cx="316" cy="251.5" r="7.5" fill="url(#cbg)" stroke="#3a2a22" stroke-width="0.6"/>
 <path d="M313.2 248.7 L318.8 254.3 M318.8 248.7 L313.2 254.3" stroke="#3a2418" stroke-width="1"/>
 <circle cx="334.5" cy="251.5" r="7.5" fill="url(#gbg)" stroke="#4a4945" stroke-width="0.8"/>
 <path d="M330.5 251.5 L338.5 251.5" stroke="#3c3b37" stroke-width="1.2"/>
 <circle cx="352.5" cy="251.5" r="7.5" fill="url(#gbg)" stroke="#4a4945" stroke-width="0.8"/>
 <rect x="349" y="248" width="7" height="7" fill="none" stroke="#3c3b37" stroke-width="1.1"/>
</svg>
<div class="abs" style="left:373px;top:243px;font-size:15px;font-weight:bold;line-height:18px;color:#dfdbd2">Home</div>
<div class="abs" style="left:298px;top:266px;width:171px;height:489px;background:#fff"></div>
<div class="abs" style="left:469px;top:266px;width:6px;height:489px;background:#f0efee"></div>
<svg class="abs" style="left:471px;top:494px" width="4" height="36"><rect x="1.5" y="1" width="1.5" height="1.5" fill="#a4a4a2"/><rect x="1.5" y="6" width="1.5" height="1.5" fill="#a4a4a2"/><rect x="1.5" y="11" width="1.5" height="1.5" fill="#a4a4a2"/><rect x="1.5" y="16" width="1.5" height="1.5" fill="#a4a4a2"/><rect x="1.5" y="21" width="1.5" height="1.5" fill="#a4a4a2"/><rect x="1.5" y="26" width="1.5" height="1.5" fill="#a4a4a2"/><rect x="1.5" y="31" width="1.5" height="1.5" fill="#a4a4a2"/></svg>
<div class="abs" style="left:475px;top:266px;width:667px;height:43px;background:#f2f1f0"></div>
<div class="abs" style="left:478px;top:269px;width:22px;height:37px;border-radius:4px;border:1px solid #c4c2bf;background:linear-gradient(#fbfbfa,#e9e8e6)"></div>
<svg class="abs" style="left:485px;top:282px" width="8" height="10"><polygon points="1,5 6,1 6,9" fill="#4a4945"/></svg>
<div class="abs" style="left:505px;top:269px;width:70px;height:37px;border-radius:4px;border:1px solid #b8b6b2;background:linear-gradient(#dedddb,#d6d5d3)"></div>
<svg class="abs" style="left:511px;top:280px" width="16" height="16" viewBox="0 0 16 16"><use href="#folder16" width="16" height="16"/><polygon points="3,9 8,5.5 13,9" fill="#b83e16"/><rect x="4.5" y="9" width="7" height="4" fill="#b83e16"/><rect x="7" y="10" width="2" height="3" fill="#e67a3c"/><rect x="3" y="12.8" width="10" height="0.8" fill="#f4a070"/></svg>
<div class="abs" style="left:529px;top:280px;font-size:15px;font-weight:bold;line-height:18px;color:#3c3b37">Home</div>
<svg class="abs" style="left:1000px;top:276px" width="60" height="22" viewBox="0 0 60 22">
 <path d="M7 11 L13 5.5 L13 9 L21.5 9 L21.5 13 L13 13 L13 16.5 Z" fill="#d6d5d3" stroke="#d6d5d3" stroke-width="2.2" stroke-linejoin="round"/>
 <path d="M52 11 L46 5.5 L46 9 L37.5 9 L37.5 13 L46 13 L46 16.5 Z" fill="#d6d5d3" stroke="#d6d5d3" stroke-width="2.2" stroke-linejoin="round"/>
</svg>
<svg class="abs" style="left:1064px;top:278px" width="20" height="20" viewBox="0 0 20 20"><circle cx="8" cy="8" r="5.3" fill="none" stroke="#3c3b37" stroke-width="2.2"/><path d="M12 12 L17 17" stroke="#3c3b37" stroke-width="2.6" stroke-linecap="round"/></svg>
<div class="abs" style="left:1089px;top:279px;font-size:14.5px;line-height:18px;color:#3c3b37">Search</div>
<svg class="abs" style="left:1125px;top:738px" width="17" height="17" viewBox="0 0 17 17"><path d="M16.5 4 L4 16.5 M16.5 8 L8 16.5 M16.5 12 L12 16.5" stroke="#858482" stroke-width="1.1"/></svg>
<div class="abs" style="left:314px;top:275px;font-size:14.6px;font-weight:bold;line-height:18px;color:#3c3b37">Devices</div>
<div class="abs" style="left:342px;top:302px;font-size:14.3px;line-height:18px;color:#3c3b37;white-space:nowrap">20 GB Files…</div><svg class="abs" style="left:322px;top:302px" width="16" height="16"><use href="#hdd16"/></svg><svg class="abs" style="left:446px;top:302px" width="15" height="16" viewBox="0 0 15 16"><polygon points="7.5,1.5 14,9 1,9" fill="#6a6a68"/><rect x="1" y="11" width="13" height="3.5" fill="#6a6a68"/></svg>
<div class="abs" style="left:342px;top:327px;font-size:14.2px;line-height:18px;color:#3c3b37;white-space:nowrap">25 GB Filesystem</div><svg class="abs" style="left:322px;top:327px" width="16" height="16"><use href="#hdd16"/></svg>
<div class="abs" style="left:342px;top:352px;font-size:14.3px;line-height:18px;color:#3c3b37;white-space:nowrap">33 GB Files…</div><svg class="abs" style="left:322px;top:352px" width="16" height="16"><use href="#hdd16"/></svg><svg class="abs" style="left:446px;top:352px" width="15" height="16" viewBox="0 0 15 16"><polygon points="7.5,1.5 14,9 1,9" fill="#6a6a68"/><rect x="1" y="11" width="13" height="3.5" fill="#6a6a68"/></svg>
<div class="abs" style="left:314px;top:380px;font-size:15px;font-weight:bold;line-height:18px;color:#3c3b37">Computer</div>
<div class="abs" style="left:298px;top:404px;width:171px;height:25px;background:#a9a8a5"></div>
<div class="abs" style="left:342px;top:408px;font-size:15px;line-height:18px;color:#ffffff;white-space:nowrap">Home</div><svg class="abs" style="left:322px;top:408px" width="16" height="16" viewBox="0 0 16 16"><use href="#folder16" width="16" height="16"/><polygon points="3,9 8,5.5 13,9" fill="#b83e16"/><rect x="4.5" y="9" width="7" height="4" fill="#b83e16"/><rect x="7" y="10" width="2" height="3" fill="#e67a3c"/><rect x="3" y="12.8" width="10" height="0.8" fill="#f4a070"/></svg>
<div class="abs" style="left:342px;top:433px;font-size:15px;line-height:18px;color:#3c3b37;white-space:nowrap">Desktop</div><svg class="abs" style="left:322px;top:433px" width="16" height="16" viewBox="0 0 16 16"><rect x="0.5" y="1.5" width="15" height="13" rx="1.5" fill="url(#dgrad)" stroke="#6a2080" stroke-width="0.6"/><rect x="0.8" y="1.8" width="14.4" height="2.8" fill="#e4e2c4"/><rect x="2" y="6" width="2" height="2.5" fill="#f0e8f0"/><rect x="2" y="9.5" width="2" height="2.5" fill="#f0e8f0"/></svg>
<div class="abs" style="left:342px;top:458px;font-size:15px;line-height:18px;color:#3c3b37;white-space:nowrap">File System</div><svg class="abs" style="left:322px;top:458px" width="16" height="16"><use href="#hdd16"/></svg>
<div class="abs" style="left:342px;top:483px;font-size:15px;line-height:18px;color:#3c3b37;white-space:nowrap">Documents</div><svg class="abs" style="left:322px;top:483px" width="16" height="16" viewBox="0 0 16 16"><use href="#folder16" width="16" height="16"/><path d="M7.5 5 L12.5 5 L15 7.5 L15 15.5 L7.5 15.5 Z" fill="#eeeeec" stroke="#9a9a98" stroke-width="0.6"/><path d="M9 9 L13.5 9 M9 11 L13.5 11 M9 13 L13.5 13" stroke="#a0a09e" stroke-width="0.6"/></svg>
<div class="abs" style="left:342px;top:508px;font-size:15px;line-height:18px;color:#3c3b37;white-space:nowrap">Downloads</div><svg class="abs" style="left:322px;top:508px" width="16" height="16" viewBox="0 0 16 16"><use href="#folder16" width="16" height="16"/><path d="M6.5 7 L9.5 7 L9.5 10 L12 10 L8 14.5 L4 10 L6.5 10 Z" fill="#eeeeec" stroke="#9a9a98" stroke-width="0.5"/></svg>
<div class="abs" style="left:342px;top:533px;font-size:15px;line-height:18px;color:#3c3b37;white-space:nowrap">Music</div><svg class="abs" style="left:322px;top:533px" width="16" height="16" viewBox="0 0 16 16"><use href="#folder16" width="16" height="16"/><path d="M9.5 4.5 L13 3.5 L13 12.5" stroke="#2e2e2e" stroke-width="1.3" fill="none"/><ellipse cx="9" cy="13" rx="2.4" ry="1.9" fill="#3a3a3a"/><path d="M9.5 4.5 L9.5 12" stroke="#2e2e2e" stroke-width="1.1"/></svg>
<div class="abs" style="left:342px;top:558px;font-size:15px;line-height:18px;color:#3c3b37;white-space:nowrap">Pictures</div><svg class="abs" style="left:322px;top:558px" width="16" height="16" viewBox="0 0 16 16"><use href="#folder16" width="16" height="16"/><rect x="7" y="5.5" width="8.5" height="9.5" fill="#f4f4f2" stroke="#8a8a88" stroke-width="0.6"/><rect x="8.5" y="7" width="5.5" height="6.5" fill="#3a3040"/></svg>
<div class="abs" style="left:342px;top:583px;font-size:15px;line-height:18px;color:#3c3b37;white-space:nowrap">Videos</div><svg class="abs" style="left:322px;top:583px" width="16" height="16" viewBox="0 0 16 16"><use href="#folder16" width="16" height="16"/><rect x="8" y="4.5" width="7.5" height="11" fill="#2a2a2a"/><rect x="9.8" y="5.5" width="4" height="4.3" fill="#a060b0"/><rect x="9.8" y="10.5" width="4" height="4.3" fill="#a060b0"/></svg>
<div class="abs" style="left:342px;top:608px;font-size:15px;line-height:18px;color:#3c3b37;white-space:nowrap">Trash</div><svg class="abs" style="left:322px;top:608px" width="16" height="16" viewBox="0 0 16 16"><ellipse cx="8" cy="2.8" rx="5.5" ry="1.6" fill="#d8d8d6" stroke="#8a8a88" stroke-width="0.7"/><path d="M2.8 3.5 L4 14 Q8 15.5 12 14 L13.2 3.5" fill="#f2f2f0" stroke="#8a8a88" stroke-width="0.7"/><path d="M4.5 5 L5.3 13" stroke="#c8c8c6" stroke-width="0.8"/></svg>
<div class="abs" style="left:314px;top:636px;font-size:15px;font-weight:bold;line-height:18px;color:#3c3b37">Network</div>
<div class="abs" style="left:342px;top:664px;font-size:15px;line-height:18px;color:#3c3b37;white-space:nowrap">Browse Network</div><svg class="abs" style="left:322px;top:664px" width="16" height="16" viewBox="0 0 16 16"><use href="#folder16" width="16" height="16"/><rect x="5" y="7" width="7" height="6.5" fill="#f0f0ee" stroke="#777" stroke-width="0.6"/><path d="M6.5 12.5 L6.5 10.5 L8.5 9 L10.5 10.5 L10.5 12.5 Z" fill="#333"/></svg>
<svg class="abs" style="left:533px;top:323px" width="48" height="42" viewBox="0 0 48 42">
<rect x="1" y="1" width="46" height="38" rx="3" fill="url(#dgrad)" stroke="#6e2488" stroke-width="0.8"/>
<path d="M1 4 Q1 1 4 1 L44 1 Q47 1 47 4 L47 7 L1 7 Z" fill="#e8e6cc"/>
<rect x="1" y="7" width="46" height="1" fill="#6a2a70" opacity=".6"/>
<rect x="7" y="11" width="5" height="7" fill="#f4eef4"/><rect x="7" y="22" width="5" height="7" fill="#f4eef4"/>
</svg>
<svg class="abs" style="left:688px;top:324px" width="48" height="42" viewBox="0 0 48 42"><use href="#folder48" x="0" y="0" width="48" height="40"/><path d="M22 12 L39 12 L44 17 L44 40 L22 40 Z" fill="#f2f2f0" stroke="#a8a8a6" stroke-width="0.8"/><path d="M39 12 L39 17 L44 17" fill="#d8d8d6" stroke="#a8a8a6" stroke-width="0.6"/><rect x="25" y="18.0" width="12" height="0.9" fill="#9a9a98"/><rect x="25" y="20.8" width="16" height="0.9" fill="#9a9a98"/><rect x="25" y="23.6" width="16" height="0.9" fill="#9a9a98"/><rect x="25" y="26.4" width="12" height="0.9" fill="#9a9a98"/><rect x="25" y="29.2" width="16" height="0.9" fill="#9a9a98"/><rect x="25" y="32.0" width="16" height="0.9" fill="#9a9a98"/><rect x="25" y="34.8" width="12" height="0.9" fill="#9a9a98"/></svg>
<svg class="abs" style="left:843px;top:324px" width="48" height="42" viewBox="0 0 48 42"><use href="#folder48" x="0" y="0" width="48" height="40"/><path d="M26 14 L39 14 L39 25 L44.5 25 L32.5 38.5 L20.5 25 L26 25 Z" fill="#efefed" stroke="#a8a8a6" stroke-width="0.8"/><path d="M27 15 L38 15 L38 20 L27 20 Z" fill="#fff" opacity=".5"/></svg>
<svg class="abs" style="left:998px;top:324px" width="48" height="42" viewBox="0 0 48 42"><use href="#folder48" x="0" y="0" width="48" height="40"/><path d="M29 17 L42 12.5 L42 31" stroke="#2a2a2a" stroke-width="3" fill="none"/><path d="M29 17 L29 35" stroke="#2a2a2a" stroke-width="2.4"/><ellipse cx="25.5" cy="35.5" rx="4.6" ry="3.5" fill="#3a3a3a" transform="rotate(-20 25.5 35.5)"/><ellipse cx="38.5" cy="31.5" rx="4.6" ry="3.5" fill="#3a3a3a" transform="rotate(-20 38.5 31.5)"/></svg>
<svg class="abs" style="left:533px;top:401px" width="48" height="42" viewBox="0 0 48 42"><use href="#folder48" x="0" y="0" width="48" height="40"/><g transform="rotate(-28 20 28)"><rect x="11" y="19" width="19" height="16" fill="#e6e6e4" stroke="#8a8a88" stroke-width="0.8"/><rect x="13.5" y="21.5" width="14" height="11" fill="#4a3a50"/></g><rect x="23" y="18.5" width="21" height="21" fill="#f4f4f2" stroke="#8a8a88" stroke-width="0.8"/><defs><linearGradient id="pg" x1="0" y1="0" x2="1" y2="1"><stop offset="0" stop-color="#2e2438"/><stop offset="1" stop-color="#6a5a78"/></linearGradient></defs><rect x="26" y="21.5" width="15" height="15" fill="url(#pg)"/></svg>
<svg class="abs" style="left:688px;top:401px" width="48" height="42" viewBox="0 0 48 42"><use href="#folder48" x="0" y="0" width="48" height="40"/><path d="M22 40 Q22 30 30 28 Q27 25 27.5 20 Q28 13.5 33 13.5 Q38 13.5 38.5 20 Q39 25 36 28 Q44 30 44 40 Z" fill="#dcdcda" stroke="#a8a8a6" stroke-width="0.8"/></svg>
<svg class="abs" style="left:843px;top:401px" width="48" height="42" viewBox="0 0 48 42"><use href="#folder48" x="0" y="0" width="48" height="40"/><path d="M22 13 L39 13 L44 18 L44 40 L22 40 Z" fill="#ebebea" stroke="#b0b0ae" stroke-width="0.8"/><path d="M22 24 L22 40 L37 40 Z" fill="#cfcfcd" stroke="#a8a8a6" stroke-width=".6"/><rect x="26" y="17" width="14" height="15" fill="none" stroke="#b8b8b6" stroke-width="0.8"/><text x="28.5" y="29.5" font-family="Liberation Sans" font-size="13" fill="#9a9a98">a</text></svg>
<svg class="abs" style="left:998px;top:401px" width="48" height="42" viewBox="0 0 48 42"><use href="#folder48" x="0" y="0" width="48" height="40"/><rect x="22" y="13" width="22" height="27" fill="#2a2a2a"/><rect x="25.5" y="15" width="15" height="11" fill="#9a62b4"/><rect x="25.5" y="27.5" width="15" height="11" fill="#8a52a4"/><rect x="23" y="14.0" width="1.5" height="1.6" fill="#aaa"/><rect x="41.6" y="14.0" width="1.5" height="1.6" fill="#aaa"/><rect x="23" y="17.3" width="1.5" height="1.6" fill="#aaa"/><rect x="41.6" y="17.3" width="1.5" height="1.6" fill="#aaa"/><rect x="23" y="20.6" width="1.5" height="1.6" fill="#aaa"/><rect x="41.6" y="20.6" width="1.5" height="1.6" fill="#aaa"/><rect x="23" y="23.9" width="1.5" height="1.6" fill="#aaa"/><rect x="41.6" y="23.9" width="1.5" height="1.6" fill="#aaa"/><rect x="23" y="27.2" width="1.5" height="1.6" fill="#aaa"/><rect x="41.6" y="27.2" width="1.5" height="1.6" fill="#aaa"/><rect x="23" y="30.5" width="1.5" height="1.6" fill="#aaa"/><rect x="41.6" y="30.5" width="1.5" height="1.6" fill="#aaa"/><rect x="23" y="33.8" width="1.5" height="1.6" fill="#aaa"/><rect x="41.6" y="33.8" width="1.5" height="1.6" fill="#aaa"/><rect x="23" y="37.099999999999994" width="1.5" height="1.6" fill="#aaa"/><rect x="41.6" y="37.099999999999994" width="1.5" height="1.6" fill="#aaa"/></svg>
<div class="abs" style="left:487px;top:366px;width:140px;text-align:center;font-size:14.8px;line-height:18px;color:#3c3b37">Desktop</div>
<div class="abs" style="left:642px;top:366px;width:140px;text-align:center;font-size:14.8px;line-height:18px;color:#3c3b37">Documents</div>
<div class="abs" style="left:797px;top:366px;width:140px;text-align:center;font-size:14.8px;line-height:18px;color:#3c3b37">Downloads</div>
<div class="abs" style="left:952px;top:366px;width:140px;text-align:center;font-size:14.8px;line-height:18px;color:#3c3b37">Music</div>
<div class="abs" style="left:487px;top:443px;width:140px;text-align:center;font-size:14.8px;line-height:18px;color:#3c3b37">Pictures</div>
<div class="abs" style="left:642px;top:443px;width:140px;text-align:center;font-size:14.8px;line-height:18px;color:#3c3b37">Public</div>
<div class="abs" style="left:797px;top:443px;width:140px;text-align:center;font-size:14.8px;line-height:18px;color:#3c3b37">Templates</div>
<div class="abs" style="left:952px;top:443px;width:140px;text-align:center;font-size:14.8px;line-height:18px;color:#3c3b37">Videos</div>
<svg class="abs" style="left:204px;top:230px" width="16" height="24" viewBox="0 0 16 24">
<path d="M1.5 1.5 L1.5 17.5 L5.3 13.8 L8.2 20.5 L10.8 19.4 L8 12.8 L13 12.8 Z" fill="#fff" stroke="#000" stroke-width="1.1" stroke-linejoin="round"/>
</svg>

</body></html>
